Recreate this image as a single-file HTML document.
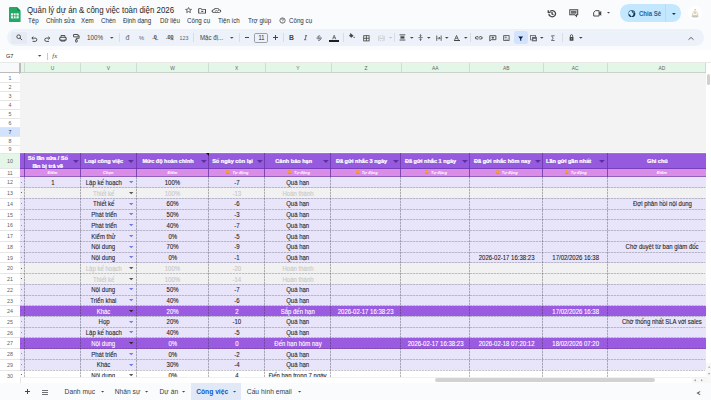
<!DOCTYPE html>
<html><head><meta charset="utf-8"><title>Sheets</title><style>
*{margin:0;padding:0;box-sizing:border-box}
html,body{width:711px;height:400px;overflow:hidden;background:#f9fbfd;font-family:"Liberation Sans",sans-serif;position:relative}
.a{position:absolute}
.t{position:absolute;white-space:nowrap;overflow:visible}
</style></head><body>
<svg class="a" style="left:9.2px;top:6.7px" width="11.6" height="15.4" viewBox="0 0 12 16" preserveAspectRatio="none">
<path d="M1.1 0H8.2L12 3.8V14.9A1.1 1.1 0 0 1 10.9 16H1.1A1.1 1.1 0 0 1 0 14.9V1.1A1.1 1.1 0 0 1 1.1 0Z" fill="#23a966"/>
<path d="M8.2 0L12 3.8H9.3A1.1 1.1 0 0 1 8.2 2.7Z" fill="#168a4f"/>
<rect x="2" y="6.6" width="8" height="5.2" fill="#fff"/>
<path d="M2 9.2H10M4.7 6.6V11.8M7.3 6.6V11.8" stroke="#23a966" stroke-width="0.9"/>
</svg>
<div class="t" style="left:27.10px;top:0.40px;width:300px;height:20px;line-height:20px;font-size:8.4px;color:#1f1f1f;font-weight:normal;text-align:left;"><span style="display:inline-block;transform:scaleX(0.94);transform-origin:0 50%">Quản lý dự án &amp; công việc toàn diện 2026</span></div>
<svg class="a" style="left:184.50px;top:7.20px;overflow:visible" width="7.10" height="6.40" viewBox="0 0 24 24" preserveAspectRatio="none"><path d="M12 2l2.9 6.6 7.1.6-5.4 4.7 1.7 7.1L12 17.2 5.7 21l1.7-7.1L2 9.2l7.1-.6z" fill="none" stroke="#444746" stroke-width="2.8" stroke-linejoin="round"/></svg>
<svg class="a" style="left:197.90px;top:7.50px;overflow:visible" width="8.20" height="5.90" viewBox="0 0 24 24" preserveAspectRatio="none"><path d="M2 3h7l2.5 3H22v15H2z" fill="none" stroke="#444746" stroke-width="3" stroke-linejoin="round"/><path d="M9.5 11.5h6v4.5h-6z" fill="#444746"/></svg>
<svg class="a" style="left:211.90px;top:7.20px;overflow:visible" width="9.00" height="6.20" viewBox="0 0 24 24" preserveAspectRatio="none"><path d="M6.5 21h12a5 5 0 0 0 .8-9.9A7.5 7.5 0 0 0 5.2 10 5.5 5.5 0 0 0 6.5 21z" fill="none" stroke="#444746" stroke-width="2.8"/><path d="M7.5 17.5l4-4 3 2.5 3.5-3" fill="none" stroke="#444746" stroke-width="2.5"/></svg>
<div class="t" style="left:27.70px;top:11.00px;width:80px;height:20px;line-height:20px;font-size:6.4px;color:#303134;font-weight:normal;text-align:left;"><span style="display:inline-block;transform:scaleX(0.97);transform-origin:0 50%">Tệp</span></div>
<div class="t" style="left:45.60px;top:11.00px;width:80px;height:20px;line-height:20px;font-size:6.4px;color:#303134;font-weight:normal;text-align:left;"><span style="display:inline-block;transform:scaleX(0.97);transform-origin:0 50%">Chỉnh sửa</span></div>
<div class="t" style="left:81.40px;top:11.00px;width:80px;height:20px;line-height:20px;font-size:6.4px;color:#303134;font-weight:normal;text-align:left;"><span style="display:inline-block;transform:scaleX(0.97);transform-origin:0 50%">Xem</span></div>
<div class="t" style="left:100.60px;top:11.00px;width:80px;height:20px;line-height:20px;font-size:6.4px;color:#303134;font-weight:normal;text-align:left;"><span style="display:inline-block;transform:scaleX(0.97);transform-origin:0 50%">Chèn</span></div>
<div class="t" style="left:123.20px;top:11.00px;width:80px;height:20px;line-height:20px;font-size:6.4px;color:#303134;font-weight:normal;text-align:left;"><span style="display:inline-block;transform:scaleX(0.97);transform-origin:0 50%">Định dạng</span></div>
<div class="t" style="left:160.10px;top:11.00px;width:80px;height:20px;line-height:20px;font-size:6.4px;color:#303134;font-weight:normal;text-align:left;"><span style="display:inline-block;transform:scaleX(0.97);transform-origin:0 50%">Dữ liệu</span></div>
<div class="t" style="left:186.90px;top:11.00px;width:80px;height:20px;line-height:20px;font-size:6.4px;color:#303134;font-weight:normal;text-align:left;"><span style="display:inline-block;transform:scaleX(0.97);transform-origin:0 50%">Công cụ</span></div>
<div class="t" style="left:217.90px;top:11.00px;width:80px;height:20px;line-height:20px;font-size:6.4px;color:#303134;font-weight:normal;text-align:left;"><span style="display:inline-block;transform:scaleX(0.97);transform-origin:0 50%">Tiện ích</span></div>
<div class="t" style="left:247.60px;top:11.00px;width:80px;height:20px;line-height:20px;font-size:6.4px;color:#303134;font-weight:normal;text-align:left;"><span style="display:inline-block;transform:scaleX(0.97);transform-origin:0 50%">Trợ giúp</span></div>
<div class="t" style="left:288.80px;top:11.00px;width:80px;height:20px;line-height:20px;font-size:6.4px;color:#303134;font-weight:normal;text-align:left;"><span style="display:inline-block;transform:scaleX(0.97);transform-origin:0 50%">Công cụ</span></div>
<svg class="a" style="left:278.5px;top:16.8px" width="7" height="7" viewBox="0 0 24 24"><circle cx="12" cy="12" r="9" fill="none" stroke="#444746" stroke-width="2.6"/><path d="M9 9a3 3 0 1 1 4 3v2" fill="none" stroke="#444746" stroke-width="2.4"/><circle cx="12" cy="17.5" r="1.4" fill="#444746"/></svg>
<svg class="a" style="left:546.60px;top:8.70px;overflow:visible" width="10.00" height="9.30" viewBox="0 0 24 24" preserveAspectRatio="none"><path d="M4.5 12a8 8 0 1 0 2.6-5.9" fill="none" stroke="#444746" stroke-width="3.2"/><path d="M3 3.5v5.5h5.5" fill="none" stroke="#444746" stroke-width="3.2"/><path d="M12 7.5v5l3.5 2.2" fill="none" stroke="#444746" stroke-width="3.2"/></svg>
<svg class="a" style="left:568.70px;top:9.00px;overflow:visible" width="9.50" height="8.40" viewBox="0 0 24 24" preserveAspectRatio="none"><path d="M2 2h20v14.5H19V21l-4.5-4.5H2z" fill="none" stroke="#444746" stroke-width="2.6"/><rect x="5" y="5" width="14" height="8.5" fill="#6b6e70"/></svg>
<svg class="a" style="left:592.90px;top:10.00px;overflow:visible" width="9.00" height="6.70" viewBox="0 0 24 18" preserveAspectRatio="none"><path d="M6.5 1.8h9.7v14.4H1.8V6.5z" fill="none" stroke="#444746" stroke-width="2.6"/><path d="M16 6.5l6-4v13l-6-4" fill="#444746"/></svg>
<svg class="a" style="left:607.10px;top:12.15px;overflow:visible" width="3.00" height="1.50" viewBox="0 0 2 1" preserveAspectRatio="none"><path d="M0 0H2L1 1z" fill="#444746"/></svg>
<div class="a" style="left:620.10px;top:4.30px;width:60.80px;height:17.60px;background:#c2e7ff;border-radius:8.8px"></div>
<div class="a" style="left:665.40px;top:4.30px;width:0.70px;height:17.60px;background:#b3dcf5"></div>
<svg class="a" style="left:628.10px;top:9.80px;overflow:visible" width="7.60" height="7.40" viewBox="0 0 24 24" preserveAspectRatio="none"><circle cx="12" cy="12" r="11" fill="#0e3553"/><path d="M10.5 22c-.5-2.5-2.5-3-2.5-5 0-1.5-2-2-3-2.5-2-1-3.5-2-3.5-3.5 1-4.5 4-7.5 8-8.5.5 1.5 2 2.5 3.5 2.5 1 1 .5 2.5-.5 3 1.5.5 2.5 1.5 4 1 1.5 1.5-.5 3 .5 4.5.5 3-3.5 6-6.5 8z" fill="#c2e7ff"/><path d="M15.5 3c2.5 1 4.5 3 5.5 5.5-1.5.5-3 0-4-1.5z" fill="#c2e7ff"/></svg>
<div class="t" style="left:639.30px;top:3.60px;width:60px;height:20px;line-height:20px;font-size:6.5px;color:#2b5f95;font-weight:bold;text-align:left;"><span style="display:inline-block;transform:scaleX(0.93);transform-origin:0 50%">Chia Sẻ</span></div>
<svg class="a" style="left:671.50px;top:12.55px;overflow:visible" width="3.80" height="1.90" viewBox="0 0 2 1" preserveAspectRatio="none"><path d="M0 0H2L1 1z" fill="#0e3553"/></svg>
<svg class="a" style="left:688px;top:6px" width="14.2" height="14" viewBox="0 0 14 14"><circle cx="7" cy="7" r="7" fill="#fff"/><path d="M4.2 9.6c.2-2.3 1.2-4.6 2.8-4.8 1.6.2 2.6 2.5 2.8 4.8z" fill="#f7f4ec" stroke="#b9b5aa" stroke-width=".5"/><circle cx="7" cy="6.8" r=".9" fill="#f0c63c"/><path d="M3.6 10.3h6.8" stroke="#8f8d86" stroke-width=".6"/><path d="M4.6 11.2h4.8" stroke="#b0aea6" stroke-width=".5"/><path d="M6.4 4.2l.8-1.2.6 1" stroke="#9c9a92" stroke-width=".5" fill="none"/></svg>
<div class="a" style="left:7.20px;top:29.10px;width:696.80px;height:16.70px;background:#edf2fa;border-radius:8.4px"></div>
<div class="a" style="left:10.60px;top:31.60px;width:16.60px;height:12.20px;background:#e5eaf3;border-radius:1.5px"></div>
<svg class="a" style="left:15.60px;top:33.90px;overflow:visible" width="6.80" height="6.80" viewBox="0 0 24 24" preserveAspectRatio="none"><circle cx="9.5" cy="9.5" r="6.5" fill="none" stroke="#444746" stroke-width="3.2"/><path d="M14.5 14.5l7 7" fill="none" stroke="#444746" stroke-width="3.4"/></svg>
<svg class="a" style="left:31.20px;top:35.50px;overflow:visible" width="6.60" height="5.80" viewBox="0 0 6.6 5.8" preserveAspectRatio="none"><path d="M2.3 0.7L0.8 2.1 2.3 3.5" fill="none" stroke="#444746" stroke-width="0.95"/><path d="M1 2.1H4.2A1.65 1.65 0 0 1 4.2 5.4H1.6" fill="none" stroke="#444746" stroke-width="0.95"/></svg>
<svg class="a" style="left:44.40px;top:35.50px;overflow:visible" width="6.60" height="5.80" viewBox="0 0 6.6 5.8" preserveAspectRatio="none"><path d="M4.3 0.7L5.8 2.1 4.3 3.5" fill="none" stroke="#444746" stroke-width="0.95"/><path d="M5.6 2.1H2.4A1.65 1.65 0 0 0 2.4 5.4H5" fill="none" stroke="#444746" stroke-width="0.95"/></svg>
<svg class="a" style="left:58.60px;top:35.00px;overflow:visible" width="7.90" height="6.50" viewBox="0 0 7.9 6.5" preserveAspectRatio="none"><path d="M2 1.9V0.5H5.9V1.9" fill="none" stroke="#444746" stroke-width="0.9"/><rect x="0.75" y="2.2" width="6.4" height="3.1" rx="1" fill="none" stroke="#444746" stroke-width="1.1"/><path d="M2 4.6V6.1H5.9V4.6" fill="none" stroke="#444746" stroke-width="0.9"/></svg>
<svg class="a" style="left:72.60px;top:33.90px;overflow:visible" width="6.60" height="8.30" viewBox="0 0 6.6 8.3" preserveAspectRatio="none"><rect x="0.5" y="0.5" width="4.6" height="2.4" rx="0.3" fill="none" stroke="#444746" stroke-width="0.95"/><path d="M5.1 1.7H6.1V4.3H3.4V5.6" fill="none" stroke="#444746" stroke-width="0.95"/><rect x="2.6" y="5.6" width="1.6" height="2.5" rx="0.3" fill="none" stroke="#444746" stroke-width="0.9"/></svg>
<div class="t" style="left:87.10px;top:27.90px;width:40px;height:20px;line-height:20px;font-size:6.6px;color:#3c4043;font-weight:normal;text-align:left;"><span style="display:inline-block;transform:scaleX(0.95);transform-origin:0 50%">100%</span></div>
<svg class="a" style="left:109.50px;top:37.00px;overflow:visible" width="3.60" height="1.80" viewBox="0 0 2 1" preserveAspectRatio="none"><path d="M0 0H2L1 1z" fill="#444746"/></svg>
<div class="a" style="left:118.75px;top:33.20px;width:0.70px;height:8.60px;background:#d9dce1"></div>
<div class="t" style="left:122.40px;top:28.00px;width:10px;height:20px;line-height:20px;font-size:7.0px;color:#5f6368;font-weight:normal;text-align:center;">đ</div>
<div class="t" style="left:136.50px;top:28.10px;width:10px;height:20px;line-height:20px;font-size:5.8px;color:#5f6368;font-weight:normal;text-align:center;">%</div>
<div class="t" style="left:148.40px;top:27.40px;width:12px;height:20px;line-height:20px;font-size:5.4px;color:#3c4043;font-weight:bold;text-align:center;">.0</div>
<div class="t" style="left:162.80px;top:27.40px;width:14px;height:20px;line-height:20px;font-size:5.4px;color:#3c4043;font-weight:bold;text-align:center;">.00</div>
<svg class="a" style="left:155.20px;top:39.20px;overflow:visible" width="3.60" height="2.00" viewBox="0 0 24 24" preserveAspectRatio="none"><path d="M22 6H4M9 1L3 6l6 5" fill="none" stroke="#444746" stroke-width="4"/></svg>
<svg class="a" style="left:169.80px;top:39.20px;overflow:visible" width="3.80" height="2.00" viewBox="0 0 24 24" preserveAspectRatio="none"><path d="M2 6h18M15 1l6 5-6 5" fill="none" stroke="#444746" stroke-width="4"/></svg>
<div class="t" style="left:174.00px;top:28.10px;width:20px;height:20px;line-height:20px;font-size:5.3px;color:#5f6368;font-weight:normal;text-align:center;">123</div>
<div class="a" style="left:193.45px;top:33.20px;width:0.70px;height:8.60px;background:#d9dce1"></div>
<div class="t" style="left:199.90px;top:28.00px;width:40px;height:20px;line-height:20px;font-size:6.5px;color:#3c4043;font-weight:normal;text-align:left;"><span style="display:inline-block;transform:scaleX(0.94);transform-origin:0 50%">Mặc đị...</span></div>
<svg class="a" style="left:229.80px;top:37.00px;overflow:visible" width="3.60" height="1.80" viewBox="0 0 2 1" preserveAspectRatio="none"><path d="M0 0H2L1 1z" fill="#444746"/></svg>
<div class="a" style="left:239.25px;top:33.20px;width:0.70px;height:8.60px;background:#d9dce1"></div>
<div class="a" style="left:244.50px;top:37.10px;width:4.70px;height:0.70px;background:#444746"></div>
<div class="a" style="left:254.30px;top:32.70px;width:14.20px;height:10.00px;border:0.75px solid #9aa0a6;border-radius:1.8px"></div>
<div class="t" style="left:254.50px;top:27.80px;width:14px;height:20px;line-height:20px;font-size:6.5px;color:#1f1f1f;font-weight:normal;text-align:center;"><span style="display:inline-block;transform:scaleX(0.88);transform-origin:50% 50%">11</span></div>
<div class="a" style="left:272.70px;top:37.10px;width:5.40px;height:0.70px;background:#444746"></div>
<div class="a" style="left:275.05px;top:34.80px;width:0.70px;height:5.40px;background:#444746"></div>
<div class="a" style="left:282.65px;top:33.20px;width:0.70px;height:8.60px;background:#d9dce1"></div>
<div class="t" style="left:286.40px;top:28.10px;width:10px;height:20px;line-height:20px;font-size:6.8px;color:#444746;font-weight:bold;text-align:center;">B</div>
<svg class="a" style="left:303.00px;top:34.90px;overflow:visible" width="5.20" height="5.40" viewBox="0 0 24 24" preserveAspectRatio="none"><path d="M9 3h10M5 21h10M14.5 3l-5 18" fill="none" stroke="#444746" stroke-width="3.4"/></svg>
<svg class="a" style="left:316.30px;top:34.60px;overflow:visible" width="6.30" height="6.20" viewBox="0 0 24 24" preserveAspectRatio="none"><path d="M16.5 5.5C15 3.8 13.5 3.5 12 3.5c-2.5 0-4.5 1.5-4.5 3.5 0 1.3.8 2.3 2 3M14.5 14c1.2.7 2 1.6 2 3 0 2-2 3.5-4.5 3.5-1.8 0-3.5-.7-4.8-2.3" fill="none" stroke="#444746" stroke-width="3.4"/><path d="M2 12h20" fill="none" stroke="#444746" stroke-width="3.4"/></svg>
<svg class="a" style="left:332.00px;top:34.70px;overflow:visible" width="4.40" height="4.50" viewBox="0 0 24 24" preserveAspectRatio="none"><path d="M3 23L12 1l9 22M6.5 15h11" fill="none" stroke="#444746" stroke-width="3.8"/></svg>
<div class="a" style="left:328.60px;top:40.10px;width:10.40px;height:1.60px;background:#1f1f1f"></div>
<div class="a" style="left:343.15px;top:33.20px;width:0.70px;height:8.60px;background:#d9dce1"></div>
<svg class="a" style="left:348.00px;top:33.40px;overflow:visible" width="7.00" height="6.00" viewBox="0 0 24 24" preserveAspectRatio="none"><path d="M10 2l9 9-7.5 7.5-8-8z" fill="#444746"/><path d="M21 14c1.2 2 2 3 2 4a2 2 0 0 1-4 0c0-1 .8-2 2-4z" fill="#444746"/><path d="M7 1l4 4" fill="none" stroke="#444746" stroke-width="2.5"/></svg>
<svg class="a" style="left:363.20px;top:34.50px;overflow:visible" width="6.80" height="6.60" viewBox="0 0 24 24" preserveAspectRatio="none"><rect x="2.5" y="2.5" width="19" height="19" fill="none" stroke="#444746" stroke-width="3"/><path d="M2.5 12h19M12 2.5v19" fill="none" stroke="#444746" stroke-width="3"/></svg>
<svg class="a" style="left:378.20px;top:34.50px;overflow:visible" width="6.90" height="6.60" viewBox="0 0 24 24" preserveAspectRatio="none"><path d="M3 3v18M21 3v18M7 3h3M14 3h3M7 21h3M14 21h3M7 12h10" fill="none" stroke="#b9bdc1" stroke-width="3"/></svg>
<svg class="a" style="left:389.00px;top:37.10px;overflow:visible" width="3.20" height="1.60" viewBox="0 0 2 1" preserveAspectRatio="none"><path d="M0 0H2L1 1z" fill="#b9bdc1"/></svg>
<div class="a" style="left:394.45px;top:33.20px;width:0.70px;height:8.60px;background:#d9dce1"></div>
<svg class="a" style="left:399.30px;top:34.40px;overflow:visible" width="6.90" height="6.90" viewBox="0 0 24 24" preserveAspectRatio="none"><path d="M2 3h20M2 21h20" fill="none" stroke="#444746" stroke-width="3.2"/><rect x="5" y="8" width="14" height="8" fill="#444746"/></svg>
<svg class="a" style="left:409.50px;top:37.00px;overflow:visible" width="3.60" height="1.80" viewBox="0 0 2 1" preserveAspectRatio="none"><path d="M0 0H2L1 1z" fill="#444746"/></svg>
<svg class="a" style="left:418.20px;top:34.20px;overflow:visible" width="5.10" height="7.20" viewBox="0 0 24 24" preserveAspectRatio="none"><path d="M2 12h20" fill="none" stroke="#444746" stroke-width="3"/><path d="M12 1v7M8.5 5l3.5 3.5L15.5 5M12 23v-7M8.5 19l3.5-3.5 3.5 3.5" fill="none" stroke="#444746" stroke-width="3"/></svg>
<svg class="a" style="left:426.70px;top:37.00px;overflow:visible" width="3.60" height="1.80" viewBox="0 0 2 1" preserveAspectRatio="none"><path d="M0 0H2L1 1z" fill="#444746"/></svg>
<svg class="a" style="left:435.70px;top:34.60px;overflow:visible" width="5.90" height="6.40" viewBox="0 0 24 24" preserveAspectRatio="none"><path d="M3 2v20M21 2v20M6 12h10M12.5 7.5L17 12l-4.5 4.5" fill="none" stroke="#444746" stroke-width="3.2"/></svg>
<svg class="a" style="left:444.60px;top:37.00px;overflow:visible" width="3.60" height="1.80" viewBox="0 0 2 1" preserveAspectRatio="none"><path d="M0 0H2L1 1z" fill="#444746"/></svg>
<svg class="a" style="left:454.40px;top:34.60px;overflow:visible" width="5.10" height="5.40" viewBox="0 0 24 24" preserveAspectRatio="none"><path d="M3 22L12 2l9 20M6.5 14.5h11" fill="none" stroke="#444746" stroke-width="3.6"/></svg>
<div class="a" style="left:453.80px;top:40.40px;width:6.20px;height:0.80px;background:#444746"></div>
<svg class="a" style="left:463.70px;top:37.00px;overflow:visible" width="3.60" height="1.80" viewBox="0 0 2 1" preserveAspectRatio="none"><path d="M0 0H2L1 1z" fill="#444746"/></svg>
<div class="a" style="left:469.75px;top:33.20px;width:0.70px;height:8.60px;background:#d9dce1"></div>
<svg class="a" style="left:474.90px;top:35.90px;overflow:visible" width="7.70" height="3.70" viewBox="0 0 24 15" preserveAspectRatio="none"><path d="M10 2.5H6.5a5 5 0 0 0 0 10H10M14 2.5h3.5a5 5 0 0 1 0 10H14M8 7.5h8" fill="none" stroke="#444746" stroke-width="3.2"/></svg>
<svg class="a" style="left:488.90px;top:34.50px;overflow:visible" width="7.70" height="6.80" viewBox="0 0 24 24" preserveAspectRatio="none"><path d="M2.5 2.5h19v14H7l-4.5 4.5z" fill="none" stroke="#444746" stroke-width="3"/><path d="M12 5.5v8M8 9.5h8" fill="none" stroke="#444746" stroke-width="3"/></svg>
<svg class="a" style="left:503.20px;top:35.00px;overflow:visible" width="6.80" height="6.20" viewBox="0 0 24 24" preserveAspectRatio="none"><rect x="2.5" y="2.5" width="19" height="19" fill="none" stroke="#444746" stroke-width="3"/><rect x="6" y="6" width="7" height="6" fill="#80868b"/><path d="M6 16h12" fill="none" stroke="#80868b" stroke-width="2.5"/></svg>
<div class="a" style="left:514.30px;top:31.00px;width:13.40px;height:13.10px;background:#d3e3fd;border-radius:2.8px"></div>
<svg class="a" style="left:518.30px;top:35.50px;overflow:visible" width="5.40" height="5.50" viewBox="0 0 24 24" preserveAspectRatio="none"><path d="M1 2h22l-8.5 10v10l-5-2.5V12z" fill="#041e49"/></svg>
<svg class="a" style="left:529.70px;top:34.80px;overflow:visible" width="7.20" height="6.60" viewBox="0 0 24 24" preserveAspectRatio="none"><rect x="2" y="2" width="16" height="16" fill="none" stroke="#5f6368" stroke-width="3"/><rect x="7" y="7" width="16" height="16" fill="#5f6368"/><rect x="11" y="14" width="8" height="5" fill="#edf2fa"/></svg>
<svg class="a" style="left:540.00px;top:37.00px;overflow:visible" width="3.60" height="1.80" viewBox="0 0 2 1" preserveAspectRatio="none"><path d="M0 0H2L1 1z" fill="#444746"/></svg>
<svg class="a" style="left:551.20px;top:34.70px;overflow:visible" width="4.30" height="6.30" viewBox="0 0 24 24" preserveAspectRatio="none"><path d="M20 3H3l9 9-9 9h17" fill="none" stroke="#444746" stroke-width="3.4"/></svg>
<div class="a" style="left:561.95px;top:33.20px;width:0.70px;height:8.60px;background:#d9dce1"></div>
<svg class="a" style="left:568.90px;top:34.30px;overflow:visible" width="5.10" height="7.00" viewBox="0 0 24 24" preserveAspectRatio="none"><path d="M6.5 11V7.5a5.5 5.5 0 0 1 11 0V11" fill="none" stroke="#444746" stroke-width="3.4"/><rect x="3" y="10" width="18" height="13" rx="2" fill="#444746"/><circle cx="12" cy="16.5" r="2" fill="#edf2fa"/></svg>
<svg class="a" style="left:578.50px;top:37.00px;overflow:visible" width="3.60" height="1.80" viewBox="0 0 2 1" preserveAspectRatio="none"><path d="M0 0H2L1 1z" fill="#444746"/></svg>
<svg class="a" style="left:688.30px;top:36.50px;overflow:visible" width="6.00" height="3.10" viewBox="0 0 24 14" preserveAspectRatio="none"><path d="M2 12L12 2l10 10" fill="none" stroke="#444746" stroke-width="3.6"/></svg>
<div class="a" style="left:0.00px;top:50.10px;width:711.00px;height:11.90px;background:#fff"></div>
<div class="a" style="left:0.00px;top:61.80px;width:711.00px;height:0.70px;background:#e8eae8"></div>
<div class="t" style="left:6.00px;top:46.20px;width:20px;height:20px;line-height:20px;font-size:5.6px;color:#1f1f1f;font-weight:normal;text-align:left;">G7</div>
<svg class="a" style="left:38.30px;top:55.15px;overflow:visible" width="3.40" height="1.70" viewBox="0 0 2 1" preserveAspectRatio="none"><path d="M0 0H2L1 1z" fill="#444746"/></svg>
<div class="a" style="left:47.30px;top:53.30px;width:0.70px;height:6.40px;background:#c7c7c7"></div>
<div class="t" style="left:52.30px;top:46.30px;width:12px;height:20px;line-height:20px;font-size:6.6px;color:#444746;font-weight:normal;text-align:left;font-style:italic;font-family:'Liberation Serif',serif">fx</div>
<div class="a" style="left:0.00px;top:62.50px;width:711.00px;height:320.50px;background:#fff"></div>
<div class="a" style="left:0.00px;top:62.50px;width:19.30px;height:10.50px;background:#f8f9fa"></div>
<div class="a" style="left:19.30px;top:62.50px;width:1.50px;height:11.00px;background:#bcbcbc"></div>
<div class="a" style="left:0.00px;top:72.30px;width:20.00px;height:1.00px;background:#bcbcbc"></div>
<div class="a" style="left:20.80px;top:62.50px;width:685.00px;height:10.50px;background:#e4f6e7"></div>
<div class="a" style="left:24.10px;top:62.50px;width:0.80px;height:10.50px;background:#cfdcd2"></div>
<div class="a" style="left:80.10px;top:62.50px;width:0.80px;height:10.50px;background:#cfdcd2"></div>
<div class="a" style="left:136.10px;top:62.50px;width:0.80px;height:10.50px;background:#cfdcd2"></div>
<div class="a" style="left:208.10px;top:62.50px;width:0.80px;height:10.50px;background:#cfdcd2"></div>
<div class="a" style="left:264.60px;top:62.50px;width:0.80px;height:10.50px;background:#cfdcd2"></div>
<div class="a" style="left:330.60px;top:62.50px;width:0.80px;height:10.50px;background:#cfdcd2"></div>
<div class="a" style="left:400.60px;top:62.50px;width:0.80px;height:10.50px;background:#cfdcd2"></div>
<div class="a" style="left:469.10px;top:62.50px;width:0.80px;height:10.50px;background:#cfdcd2"></div>
<div class="a" style="left:542.60px;top:62.50px;width:0.80px;height:10.50px;background:#cfdcd2"></div>
<div class="a" style="left:607.10px;top:62.50px;width:0.80px;height:10.50px;background:#cfdcd2"></div>
<div class="a" style="left:705.40px;top:62.50px;width:0.80px;height:10.50px;background:#cfdcd2"></div>
<div class="a" style="left:20.80px;top:72.40px;width:685.00px;height:0.60px;background:#c8d3cb"></div>
<div class="t" style="left:32.50px;top:58.80px;width:40px;height:20px;line-height:20px;font-size:4.9px;color:#5f6368;font-weight:normal;text-align:center;">U</div>
<div class="t" style="left:88.50px;top:58.80px;width:40px;height:20px;line-height:20px;font-size:4.9px;color:#5f6368;font-weight:normal;text-align:center;">V</div>
<div class="t" style="left:152.50px;top:58.80px;width:40px;height:20px;line-height:20px;font-size:4.9px;color:#5f6368;font-weight:normal;text-align:center;">W</div>
<div class="t" style="left:216.75px;top:58.80px;width:40px;height:20px;line-height:20px;font-size:4.9px;color:#5f6368;font-weight:normal;text-align:center;">X</div>
<div class="t" style="left:278.00px;top:58.80px;width:40px;height:20px;line-height:20px;font-size:4.9px;color:#5f6368;font-weight:normal;text-align:center;">Y</div>
<div class="t" style="left:346.00px;top:58.80px;width:40px;height:20px;line-height:20px;font-size:4.9px;color:#5f6368;font-weight:normal;text-align:center;">Z</div>
<div class="t" style="left:415.25px;top:58.80px;width:40px;height:20px;line-height:20px;font-size:4.9px;color:#5f6368;font-weight:normal;text-align:center;">AA</div>
<div class="t" style="left:486.25px;top:58.80px;width:40px;height:20px;line-height:20px;font-size:4.9px;color:#5f6368;font-weight:normal;text-align:center;">AB</div>
<div class="t" style="left:555.25px;top:58.80px;width:40px;height:20px;line-height:20px;font-size:4.9px;color:#5f6368;font-weight:normal;text-align:center;">AC</div>
<div class="t" style="left:642.00px;top:58.80px;width:40px;height:20px;line-height:20px;font-size:4.9px;color:#5f6368;font-weight:normal;text-align:center;">AD</div>
<div class="a" style="left:0.00px;top:73.50px;width:19.80px;height:8.70px;background:#fff"></div>
<div class="a" style="left:0.00px;top:82.20px;width:19.80px;height:9.00px;background:#fff"></div>
<div class="a" style="left:0.00px;top:91.20px;width:19.80px;height:9.10px;background:#fff"></div>
<div class="a" style="left:0.00px;top:100.30px;width:19.80px;height:8.95px;background:#fff"></div>
<div class="a" style="left:0.00px;top:109.25px;width:19.80px;height:9.00px;background:#fff"></div>
<div class="a" style="left:0.00px;top:118.25px;width:19.80px;height:8.85px;background:#fff"></div>
<div class="a" style="left:0.00px;top:127.10px;width:19.80px;height:9.10px;background:#d3e3fd"></div>
<div class="a" style="left:0.00px;top:136.20px;width:19.80px;height:8.80px;background:#fff"></div>
<div class="a" style="left:0.00px;top:145.00px;width:19.80px;height:8.00px;background:#fff"></div>
<div class="a" style="left:0.00px;top:153.00px;width:19.80px;height:15.50px;background:#e4f6e7"></div>
<div class="a" style="left:0.00px;top:168.50px;width:19.80px;height:8.50px;background:#fff"></div>
<div class="a" style="left:0.00px;top:177.00px;width:19.80px;height:10.73px;background:#fff"></div>
<div class="a" style="left:0.00px;top:187.73px;width:19.80px;height:10.73px;background:#fff"></div>
<div class="a" style="left:0.00px;top:198.46px;width:19.80px;height:10.73px;background:#fff"></div>
<div class="a" style="left:0.00px;top:209.19px;width:19.80px;height:10.73px;background:#fff"></div>
<div class="a" style="left:0.00px;top:219.92px;width:19.80px;height:10.73px;background:#fff"></div>
<div class="a" style="left:0.00px;top:230.65px;width:19.80px;height:10.73px;background:#fff"></div>
<div class="a" style="left:0.00px;top:241.38px;width:19.80px;height:10.73px;background:#fff"></div>
<div class="a" style="left:0.00px;top:252.11px;width:19.80px;height:10.73px;background:#fff"></div>
<div class="a" style="left:0.00px;top:262.84px;width:19.80px;height:10.73px;background:#fff"></div>
<div class="a" style="left:0.00px;top:273.57px;width:19.80px;height:10.73px;background:#fff"></div>
<div class="a" style="left:0.00px;top:284.30px;width:19.80px;height:10.73px;background:#fff"></div>
<div class="a" style="left:0.00px;top:295.03px;width:19.80px;height:10.73px;background:#fff"></div>
<div class="a" style="left:0.00px;top:305.76px;width:19.80px;height:10.73px;background:#fff"></div>
<div class="a" style="left:0.00px;top:316.49px;width:19.80px;height:10.73px;background:#fff"></div>
<div class="a" style="left:0.00px;top:327.22px;width:19.80px;height:10.73px;background:#fff"></div>
<div class="a" style="left:0.00px;top:337.95px;width:19.80px;height:10.73px;background:#fff"></div>
<div class="a" style="left:0.00px;top:348.68px;width:19.80px;height:10.73px;background:#fff"></div>
<div class="a" style="left:0.00px;top:359.41px;width:19.80px;height:10.73px;background:#fff"></div>
<div class="a" style="left:0.00px;top:370.14px;width:19.80px;height:7.46px;background:#fff"></div>
<div class="a" style="left:0.00px;top:82.00px;width:19.80px;height:1.00px;background:#e6e6e6"></div>
<div class="a" style="left:0.00px;top:91.00px;width:19.80px;height:1.00px;background:#e6e6e6"></div>
<div class="a" style="left:0.00px;top:100.00px;width:19.80px;height:1.00px;background:#e6e6e6"></div>
<div class="a" style="left:0.00px;top:109.00px;width:19.80px;height:1.00px;background:#e6e6e6"></div>
<div class="a" style="left:0.00px;top:118.00px;width:19.80px;height:1.00px;background:#e6e6e6"></div>
<div class="a" style="left:0.00px;top:127.00px;width:19.80px;height:1.00px;background:#e6e6e6"></div>
<div class="a" style="left:0.00px;top:136.00px;width:19.80px;height:1.00px;background:#e6e6e6"></div>
<div class="a" style="left:0.00px;top:145.00px;width:19.80px;height:1.00px;background:#e6e6e6"></div>
<div class="a" style="left:0.00px;top:153.00px;width:19.80px;height:1.00px;background:#e6e6e6"></div>
<div class="a" style="left:0.00px;top:168.00px;width:19.80px;height:1.00px;background:#e6e6e6"></div>
<div class="a" style="left:0.00px;top:177.00px;width:19.80px;height:1.00px;background:#e6e6e6"></div>
<div class="a" style="left:0.00px;top:187.00px;width:19.80px;height:1.00px;background:#e6e6e6"></div>
<div class="a" style="left:0.00px;top:198.00px;width:19.80px;height:1.00px;background:#e6e6e6"></div>
<div class="a" style="left:0.00px;top:209.00px;width:19.80px;height:1.00px;background:#e6e6e6"></div>
<div class="a" style="left:0.00px;top:219.00px;width:19.80px;height:1.00px;background:#e6e6e6"></div>
<div class="a" style="left:0.00px;top:230.00px;width:19.80px;height:1.00px;background:#e6e6e6"></div>
<div class="a" style="left:0.00px;top:241.00px;width:19.80px;height:1.00px;background:#e6e6e6"></div>
<div class="a" style="left:0.00px;top:252.00px;width:19.80px;height:1.00px;background:#e6e6e6"></div>
<div class="a" style="left:0.00px;top:262.00px;width:19.80px;height:1.00px;background:#e6e6e6"></div>
<div class="a" style="left:0.00px;top:273.00px;width:19.80px;height:1.00px;background:#e6e6e6"></div>
<div class="a" style="left:0.00px;top:284.00px;width:19.80px;height:1.00px;background:#e6e6e6"></div>
<div class="a" style="left:0.00px;top:295.00px;width:19.80px;height:1.00px;background:#e6e6e6"></div>
<div class="a" style="left:0.00px;top:305.00px;width:19.80px;height:1.00px;background:#e6e6e6"></div>
<div class="a" style="left:0.00px;top:316.00px;width:19.80px;height:1.00px;background:#e6e6e6"></div>
<div class="a" style="left:0.00px;top:327.00px;width:19.80px;height:1.00px;background:#e6e6e6"></div>
<div class="a" style="left:0.00px;top:337.00px;width:19.80px;height:1.00px;background:#e6e6e6"></div>
<div class="a" style="left:0.00px;top:348.00px;width:19.80px;height:1.00px;background:#e6e6e6"></div>
<div class="a" style="left:0.00px;top:359.00px;width:19.80px;height:1.00px;background:#e6e6e6"></div>
<div class="a" style="left:0.00px;top:370.00px;width:19.80px;height:1.00px;background:#e6e6e6"></div>
<div class="t" style="left:0.00px;top:67.95px;width:20px;height:20px;line-height:20px;font-size:5.3px;color:#5f6368;font-weight:normal;text-align:center;">1</div>
<div class="t" style="left:0.00px;top:76.80px;width:20px;height:20px;line-height:20px;font-size:5.3px;color:#5f6368;font-weight:normal;text-align:center;">2</div>
<div class="t" style="left:0.00px;top:85.85px;width:20px;height:20px;line-height:20px;font-size:5.3px;color:#5f6368;font-weight:normal;text-align:center;">3</div>
<div class="t" style="left:0.00px;top:94.88px;width:20px;height:20px;line-height:20px;font-size:5.3px;color:#5f6368;font-weight:normal;text-align:center;">4</div>
<div class="t" style="left:0.00px;top:103.85px;width:20px;height:20px;line-height:20px;font-size:5.3px;color:#5f6368;font-weight:normal;text-align:center;">5</div>
<div class="t" style="left:0.00px;top:112.77px;width:20px;height:20px;line-height:20px;font-size:5.3px;color:#5f6368;font-weight:normal;text-align:center;">6</div>
<div class="t" style="left:0.00px;top:121.75px;width:20px;height:20px;line-height:20px;font-size:5.3px;color:#0a2a66;font-weight:normal;text-align:center;">7</div>
<div class="t" style="left:0.00px;top:130.70px;width:20px;height:20px;line-height:20px;font-size:5.3px;color:#5f6368;font-weight:normal;text-align:center;">8</div>
<div class="t" style="left:0.00px;top:139.10px;width:20px;height:20px;line-height:20px;font-size:5.3px;color:#5f6368;font-weight:normal;text-align:center;">9</div>
<div class="t" style="left:0.00px;top:150.85px;width:20px;height:20px;line-height:20px;font-size:5.3px;color:#5f6368;font-weight:normal;text-align:center;">10</div>
<div class="t" style="left:0.00px;top:162.85px;width:20px;height:20px;line-height:20px;font-size:5.3px;color:#5f6368;font-weight:normal;text-align:center;">11</div>
<div class="t" style="left:0.00px;top:172.47px;width:20px;height:20px;line-height:20px;font-size:5.3px;color:#5f6368;font-weight:normal;text-align:center;">12</div>
<div class="t" style="left:0.00px;top:183.20px;width:20px;height:20px;line-height:20px;font-size:5.3px;color:#5f6368;font-weight:normal;text-align:center;">13</div>
<div class="t" style="left:0.00px;top:193.93px;width:20px;height:20px;line-height:20px;font-size:5.3px;color:#5f6368;font-weight:normal;text-align:center;">14</div>
<div class="t" style="left:0.00px;top:204.66px;width:20px;height:20px;line-height:20px;font-size:5.3px;color:#5f6368;font-weight:normal;text-align:center;">15</div>
<div class="t" style="left:0.00px;top:215.39px;width:20px;height:20px;line-height:20px;font-size:5.3px;color:#5f6368;font-weight:normal;text-align:center;">16</div>
<div class="t" style="left:0.00px;top:226.12px;width:20px;height:20px;line-height:20px;font-size:5.3px;color:#5f6368;font-weight:normal;text-align:center;">17</div>
<div class="t" style="left:0.00px;top:236.85px;width:20px;height:20px;line-height:20px;font-size:5.3px;color:#5f6368;font-weight:normal;text-align:center;">18</div>
<div class="t" style="left:0.00px;top:247.58px;width:20px;height:20px;line-height:20px;font-size:5.3px;color:#5f6368;font-weight:normal;text-align:center;">19</div>
<div class="t" style="left:0.00px;top:258.31px;width:20px;height:20px;line-height:20px;font-size:5.3px;color:#5f6368;font-weight:normal;text-align:center;">20</div>
<div class="t" style="left:0.00px;top:269.04px;width:20px;height:20px;line-height:20px;font-size:5.3px;color:#5f6368;font-weight:normal;text-align:center;">21</div>
<div class="t" style="left:0.00px;top:279.76px;width:20px;height:20px;line-height:20px;font-size:5.3px;color:#5f6368;font-weight:normal;text-align:center;">22</div>
<div class="t" style="left:0.00px;top:290.50px;width:20px;height:20px;line-height:20px;font-size:5.3px;color:#5f6368;font-weight:normal;text-align:center;">23</div>
<div class="t" style="left:0.00px;top:301.23px;width:20px;height:20px;line-height:20px;font-size:5.3px;color:#5f6368;font-weight:normal;text-align:center;">24</div>
<div class="t" style="left:0.00px;top:311.96px;width:20px;height:20px;line-height:20px;font-size:5.3px;color:#5f6368;font-weight:normal;text-align:center;">25</div>
<div class="t" style="left:0.00px;top:322.69px;width:20px;height:20px;line-height:20px;font-size:5.3px;color:#5f6368;font-weight:normal;text-align:center;">26</div>
<div class="t" style="left:0.00px;top:333.42px;width:20px;height:20px;line-height:20px;font-size:5.3px;color:#5f6368;font-weight:normal;text-align:center;">27</div>
<div class="t" style="left:0.00px;top:344.14px;width:20px;height:20px;line-height:20px;font-size:5.3px;color:#5f6368;font-weight:normal;text-align:center;">28</div>
<div class="t" style="left:0.00px;top:354.88px;width:20px;height:20px;line-height:20px;font-size:5.3px;color:#5f6368;font-weight:normal;text-align:center;">29</div>
<div class="t" style="left:0.00px;top:365.61px;width:20px;height:20px;line-height:20px;font-size:5.3px;color:#5f6368;font-weight:normal;text-align:center;">30</div>
<div class="a" style="left:19.50px;top:73.00px;width:0.70px;height:304.60px;background:#d7d7d7"></div>
<div class="a" style="left:20.20px;top:73.30px;width:685.60px;height:79.70px;background:#f3f3f3"></div>
<div class="a" style="left:20.20px;top:153.00px;width:685.60px;height:15.50px;background:#955ade"></div>
<div class="a" style="left:20.20px;top:152.00px;width:685.60px;height:1.00px;background:#fbfbfb"></div>
<div class="a" style="left:20.20px;top:153.00px;width:685.60px;height:1.00px;background:#7d8f9a"></div>
<div class="a" style="left:20.20px;top:168.50px;width:685.60px;height:8.50px;background:#d98de7"></div>
<div class="a" style="left:20.20px;top:168.10px;width:685.60px;height:0.80px;background:#7a3fbe"></div>
<div class="a" style="left:20.20px;top:176.00px;width:685.60px;height:1.00px;background:#8e62bd"></div>
<div class="a" style="left:20.20px;top:177.00px;width:685.60px;height:10.73px;background:#e8e5fb"></div>
<div class="a" style="left:20.20px;top:187.73px;width:685.60px;height:10.73px;background:#f1f1f1"></div>
<div class="a" style="left:20.20px;top:198.46px;width:685.60px;height:10.73px;background:#e8e5fb"></div>
<div class="a" style="left:20.20px;top:209.19px;width:685.60px;height:10.73px;background:#e8e5fb"></div>
<div class="a" style="left:20.20px;top:219.92px;width:685.60px;height:10.73px;background:#e8e5fb"></div>
<div class="a" style="left:20.20px;top:230.65px;width:685.60px;height:10.73px;background:#e8e5fb"></div>
<div class="a" style="left:20.20px;top:241.38px;width:685.60px;height:10.73px;background:#e8e5fb"></div>
<div class="a" style="left:20.20px;top:252.11px;width:685.60px;height:10.73px;background:#e8e5fb"></div>
<div class="a" style="left:20.20px;top:262.84px;width:685.60px;height:10.73px;background:#f1f1f1"></div>
<div class="a" style="left:20.20px;top:273.57px;width:685.60px;height:10.73px;background:#f1f1f1"></div>
<div class="a" style="left:20.20px;top:284.30px;width:685.60px;height:10.73px;background:#e8e5fb"></div>
<div class="a" style="left:20.20px;top:295.03px;width:685.60px;height:10.73px;background:#e8e5fb"></div>
<div class="a" style="left:20.20px;top:305.76px;width:685.60px;height:10.73px;background:#9b5be0"></div>
<div class="a" style="left:20.20px;top:316.49px;width:685.60px;height:10.73px;background:#e8e5fb"></div>
<div class="a" style="left:20.20px;top:327.22px;width:685.60px;height:10.73px;background:#e8e5fb"></div>
<div class="a" style="left:20.20px;top:337.95px;width:685.60px;height:10.73px;background:#9b5be0"></div>
<div class="a" style="left:20.20px;top:348.68px;width:685.60px;height:10.73px;background:#e8e5fb"></div>
<div class="a" style="left:20.20px;top:359.41px;width:685.60px;height:10.73px;background:#e8e5fb"></div>
<div class="a" style="left:20.20px;top:370.14px;width:685.60px;height:7.46px;background:#fff"></div>
<div class="t" style="left:2.50px;top:172.97px;width:100px;height:20px;line-height:20px;font-size:6.6px;color:#1f1f1f;font-weight:normal;text-align:center;-webkit-text-stroke:0.1px #1f1f1f"><span style="display:inline-block;transform:scaleX(0.91);transform-origin:50% 50%">1</span></div>
<div class="t" style="left:73.70px;top:172.97px;width:60px;height:20px;line-height:20px;font-size:6.6px;color:#1f1f1f;font-weight:normal;text-align:center;-webkit-text-stroke:0.1px #1f1f1f"><span style="display:inline-block;transform:scaleX(0.91);transform-origin:50% 50%">Lập kế hoạch</span></div>
<div class="t" style="left:122.50px;top:172.97px;width:100px;height:20px;line-height:20px;font-size:6.6px;color:#1f1f1f;font-weight:normal;text-align:center;-webkit-text-stroke:0.1px #1f1f1f"><span style="display:inline-block;transform:scaleX(0.91);transform-origin:50% 50%">100%</span></div>
<div class="t" style="left:186.75px;top:172.97px;width:100px;height:20px;line-height:20px;font-size:6.6px;color:#1f1f1f;font-weight:normal;text-align:center;-webkit-text-stroke:0.1px #1f1f1f"><span style="display:inline-block;transform:scaleX(0.91);transform-origin:50% 50%">-7</span></div>
<div class="t" style="left:248.00px;top:172.97px;width:100px;height:20px;line-height:20px;font-size:6.6px;color:#1f1f1f;font-weight:normal;text-align:center;-webkit-text-stroke:0.1px #1f1f1f"><span style="display:inline-block;transform:scaleX(0.91);transform-origin:50% 50%">Quá hạn</span></div>
<svg class="a" style="left:129.10px;top:181.17px;overflow:visible" width="4.40" height="2.20" viewBox="0 0 2 1" preserveAspectRatio="none"><path d="M0 0H2L1 1z" fill="#6d7be8"/></svg>
<div class="a" style="left:20.60px;top:181.67px;width:0.80px;height:0.80px;background:#8a94ef"></div>
<div class="t" style="left:73.70px;top:183.70px;width:60px;height:20px;line-height:20px;font-size:6.6px;color:#c8c8c8;font-weight:normal;text-align:center;-webkit-text-stroke:0.1px #c8c8c8"><span style="display:inline-block;transform:scaleX(0.91);transform-origin:50% 50%">Thiết kế</span></div>
<div class="t" style="left:122.50px;top:183.70px;width:100px;height:20px;line-height:20px;font-size:6.6px;color:#c8c8c8;font-weight:normal;text-align:center;-webkit-text-stroke:0.1px #c8c8c8"><span style="display:inline-block;transform:scaleX(0.91);transform-origin:50% 50%">100%</span></div>
<div class="t" style="left:186.75px;top:183.70px;width:100px;height:20px;line-height:20px;font-size:6.6px;color:#c8c8c8;font-weight:normal;text-align:center;-webkit-text-stroke:0.1px #c8c8c8"><span style="display:inline-block;transform:scaleX(0.91);transform-origin:50% 50%">-13</span></div>
<div class="t" style="left:248.00px;top:183.70px;width:100px;height:20px;line-height:20px;font-size:6.6px;color:#c8c8c8;font-weight:normal;text-align:center;-webkit-text-stroke:0.1px #c8c8c8"><span style="display:inline-block;transform:scaleX(0.91);transform-origin:50% 50%">Hoàn thành</span></div>
<svg class="a" style="left:129.10px;top:191.90px;overflow:visible" width="4.40" height="2.20" viewBox="0 0 2 1" preserveAspectRatio="none"><path d="M0 0H2L1 1z" fill="#555"/></svg>
<div class="a" style="left:20.60px;top:192.40px;width:0.80px;height:0.80px;background:#666"></div>
<div class="t" style="left:73.70px;top:194.43px;width:60px;height:20px;line-height:20px;font-size:6.6px;color:#1f1f1f;font-weight:normal;text-align:center;-webkit-text-stroke:0.1px #1f1f1f"><span style="display:inline-block;transform:scaleX(0.91);transform-origin:50% 50%">Thiết kế</span></div>
<div class="t" style="left:122.50px;top:194.43px;width:100px;height:20px;line-height:20px;font-size:6.6px;color:#1f1f1f;font-weight:normal;text-align:center;-webkit-text-stroke:0.1px #1f1f1f"><span style="display:inline-block;transform:scaleX(0.91);transform-origin:50% 50%">60%</span></div>
<div class="t" style="left:186.75px;top:194.43px;width:100px;height:20px;line-height:20px;font-size:6.6px;color:#1f1f1f;font-weight:normal;text-align:center;-webkit-text-stroke:0.1px #1f1f1f"><span style="display:inline-block;transform:scaleX(0.91);transform-origin:50% 50%">-6</span></div>
<div class="t" style="left:248.00px;top:194.43px;width:100px;height:20px;line-height:20px;font-size:6.6px;color:#1f1f1f;font-weight:normal;text-align:center;-webkit-text-stroke:0.1px #1f1f1f"><span style="display:inline-block;transform:scaleX(0.91);transform-origin:50% 50%">Quá hạn</span></div>
<div class="t" style="left:602.00px;top:194.43px;width:120px;height:20px;line-height:20px;font-size:6.6px;color:#1f1f1f;font-weight:normal;text-align:center;-webkit-text-stroke:0.1px #1f1f1f"><span style="display:inline-block;transform:scaleX(0.91);transform-origin:50% 50%">Đợi phản hồi nội dung</span></div>
<svg class="a" style="left:129.10px;top:202.62px;overflow:visible" width="4.40" height="2.20" viewBox="0 0 2 1" preserveAspectRatio="none"><path d="M0 0H2L1 1z" fill="#6d7be8"/></svg>
<div class="a" style="left:20.60px;top:203.12px;width:0.80px;height:0.80px;background:#8a94ef"></div>
<div class="t" style="left:73.70px;top:205.16px;width:60px;height:20px;line-height:20px;font-size:6.6px;color:#1f1f1f;font-weight:normal;text-align:center;-webkit-text-stroke:0.1px #1f1f1f"><span style="display:inline-block;transform:scaleX(0.91);transform-origin:50% 50%">Phát triển</span></div>
<div class="t" style="left:122.50px;top:205.16px;width:100px;height:20px;line-height:20px;font-size:6.6px;color:#1f1f1f;font-weight:normal;text-align:center;-webkit-text-stroke:0.1px #1f1f1f"><span style="display:inline-block;transform:scaleX(0.91);transform-origin:50% 50%">50%</span></div>
<div class="t" style="left:186.75px;top:205.16px;width:100px;height:20px;line-height:20px;font-size:6.6px;color:#1f1f1f;font-weight:normal;text-align:center;-webkit-text-stroke:0.1px #1f1f1f"><span style="display:inline-block;transform:scaleX(0.91);transform-origin:50% 50%">-3</span></div>
<div class="t" style="left:248.00px;top:205.16px;width:100px;height:20px;line-height:20px;font-size:6.6px;color:#1f1f1f;font-weight:normal;text-align:center;-webkit-text-stroke:0.1px #1f1f1f"><span style="display:inline-block;transform:scaleX(0.91);transform-origin:50% 50%">Quá hạn</span></div>
<svg class="a" style="left:129.10px;top:213.36px;overflow:visible" width="4.40" height="2.20" viewBox="0 0 2 1" preserveAspectRatio="none"><path d="M0 0H2L1 1z" fill="#6d7be8"/></svg>
<div class="a" style="left:20.60px;top:213.86px;width:0.80px;height:0.80px;background:#8a94ef"></div>
<div class="t" style="left:73.70px;top:215.89px;width:60px;height:20px;line-height:20px;font-size:6.6px;color:#1f1f1f;font-weight:normal;text-align:center;-webkit-text-stroke:0.1px #1f1f1f"><span style="display:inline-block;transform:scaleX(0.91);transform-origin:50% 50%">Phát triển</span></div>
<div class="t" style="left:122.50px;top:215.89px;width:100px;height:20px;line-height:20px;font-size:6.6px;color:#1f1f1f;font-weight:normal;text-align:center;-webkit-text-stroke:0.1px #1f1f1f"><span style="display:inline-block;transform:scaleX(0.91);transform-origin:50% 50%">40%</span></div>
<div class="t" style="left:186.75px;top:215.89px;width:100px;height:20px;line-height:20px;font-size:6.6px;color:#1f1f1f;font-weight:normal;text-align:center;-webkit-text-stroke:0.1px #1f1f1f"><span style="display:inline-block;transform:scaleX(0.91);transform-origin:50% 50%">-7</span></div>
<div class="t" style="left:248.00px;top:215.89px;width:100px;height:20px;line-height:20px;font-size:6.6px;color:#1f1f1f;font-weight:normal;text-align:center;-webkit-text-stroke:0.1px #1f1f1f"><span style="display:inline-block;transform:scaleX(0.91);transform-origin:50% 50%">Quá hạn</span></div>
<svg class="a" style="left:129.10px;top:224.09px;overflow:visible" width="4.40" height="2.20" viewBox="0 0 2 1" preserveAspectRatio="none"><path d="M0 0H2L1 1z" fill="#6d7be8"/></svg>
<div class="a" style="left:20.60px;top:224.59px;width:0.80px;height:0.80px;background:#8a94ef"></div>
<div class="t" style="left:73.70px;top:226.62px;width:60px;height:20px;line-height:20px;font-size:6.6px;color:#1f1f1f;font-weight:normal;text-align:center;-webkit-text-stroke:0.1px #1f1f1f"><span style="display:inline-block;transform:scaleX(0.91);transform-origin:50% 50%">Kiểm thử</span></div>
<div class="t" style="left:122.50px;top:226.62px;width:100px;height:20px;line-height:20px;font-size:6.6px;color:#1f1f1f;font-weight:normal;text-align:center;-webkit-text-stroke:0.1px #1f1f1f"><span style="display:inline-block;transform:scaleX(0.91);transform-origin:50% 50%">0%</span></div>
<div class="t" style="left:186.75px;top:226.62px;width:100px;height:20px;line-height:20px;font-size:6.6px;color:#1f1f1f;font-weight:normal;text-align:center;-webkit-text-stroke:0.1px #1f1f1f"><span style="display:inline-block;transform:scaleX(0.91);transform-origin:50% 50%">-5</span></div>
<div class="t" style="left:248.00px;top:226.62px;width:100px;height:20px;line-height:20px;font-size:6.6px;color:#1f1f1f;font-weight:normal;text-align:center;-webkit-text-stroke:0.1px #1f1f1f"><span style="display:inline-block;transform:scaleX(0.91);transform-origin:50% 50%">Quá hạn</span></div>
<svg class="a" style="left:129.10px;top:234.81px;overflow:visible" width="4.40" height="2.20" viewBox="0 0 2 1" preserveAspectRatio="none"><path d="M0 0H2L1 1z" fill="#6d7be8"/></svg>
<div class="a" style="left:20.60px;top:235.31px;width:0.80px;height:0.80px;background:#8a94ef"></div>
<div class="t" style="left:73.70px;top:237.35px;width:60px;height:20px;line-height:20px;font-size:6.6px;color:#1f1f1f;font-weight:normal;text-align:center;-webkit-text-stroke:0.1px #1f1f1f"><span style="display:inline-block;transform:scaleX(0.91);transform-origin:50% 50%">Nội dung</span></div>
<div class="t" style="left:122.50px;top:237.35px;width:100px;height:20px;line-height:20px;font-size:6.6px;color:#1f1f1f;font-weight:normal;text-align:center;-webkit-text-stroke:0.1px #1f1f1f"><span style="display:inline-block;transform:scaleX(0.91);transform-origin:50% 50%">70%</span></div>
<div class="t" style="left:186.75px;top:237.35px;width:100px;height:20px;line-height:20px;font-size:6.6px;color:#1f1f1f;font-weight:normal;text-align:center;-webkit-text-stroke:0.1px #1f1f1f"><span style="display:inline-block;transform:scaleX(0.91);transform-origin:50% 50%">-9</span></div>
<div class="t" style="left:248.00px;top:237.35px;width:100px;height:20px;line-height:20px;font-size:6.6px;color:#1f1f1f;font-weight:normal;text-align:center;-webkit-text-stroke:0.1px #1f1f1f"><span style="display:inline-block;transform:scaleX(0.91);transform-origin:50% 50%">Quá hạn</span></div>
<div class="t" style="left:602.00px;top:237.35px;width:120px;height:20px;line-height:20px;font-size:6.6px;color:#1f1f1f;font-weight:normal;text-align:center;-webkit-text-stroke:0.1px #1f1f1f"><span style="display:inline-block;transform:scaleX(0.91);transform-origin:50% 50%">Chờ duyệt từ ban giám đốc</span></div>
<svg class="a" style="left:129.10px;top:245.55px;overflow:visible" width="4.40" height="2.20" viewBox="0 0 2 1" preserveAspectRatio="none"><path d="M0 0H2L1 1z" fill="#6d7be8"/></svg>
<div class="a" style="left:20.60px;top:246.05px;width:0.80px;height:0.80px;background:#8a94ef"></div>
<div class="t" style="left:73.70px;top:248.08px;width:60px;height:20px;line-height:20px;font-size:6.6px;color:#1f1f1f;font-weight:normal;text-align:center;-webkit-text-stroke:0.1px #1f1f1f"><span style="display:inline-block;transform:scaleX(0.91);transform-origin:50% 50%">Nội dung</span></div>
<div class="t" style="left:122.50px;top:248.08px;width:100px;height:20px;line-height:20px;font-size:6.6px;color:#1f1f1f;font-weight:normal;text-align:center;-webkit-text-stroke:0.1px #1f1f1f"><span style="display:inline-block;transform:scaleX(0.91);transform-origin:50% 50%">0%</span></div>
<div class="t" style="left:186.75px;top:248.08px;width:100px;height:20px;line-height:20px;font-size:6.6px;color:#1f1f1f;font-weight:normal;text-align:center;-webkit-text-stroke:0.1px #1f1f1f"><span style="display:inline-block;transform:scaleX(0.91);transform-origin:50% 50%">-1</span></div>
<div class="t" style="left:248.00px;top:248.08px;width:100px;height:20px;line-height:20px;font-size:6.6px;color:#1f1f1f;font-weight:normal;text-align:center;-webkit-text-stroke:0.1px #1f1f1f"><span style="display:inline-block;transform:scaleX(0.91);transform-origin:50% 50%">Quá hạn</span></div>
<div class="t" style="left:456.25px;top:248.08px;width:100px;height:20px;line-height:20px;font-size:6.6px;color:#1f1f1f;font-weight:normal;text-align:center;-webkit-text-stroke:0.1px #1f1f1f"><span style="display:inline-block;transform:scaleX(0.91);transform-origin:50% 50%">2026-02-17 16:38:23</span></div>
<div class="t" style="left:525.25px;top:248.08px;width:100px;height:20px;line-height:20px;font-size:6.6px;color:#1f1f1f;font-weight:normal;text-align:center;-webkit-text-stroke:0.1px #1f1f1f"><span style="display:inline-block;transform:scaleX(0.91);transform-origin:50% 50%">17/02/2026 16:38</span></div>
<svg class="a" style="left:129.10px;top:256.28px;overflow:visible" width="4.40" height="2.20" viewBox="0 0 2 1" preserveAspectRatio="none"><path d="M0 0H2L1 1z" fill="#6d7be8"/></svg>
<div class="a" style="left:20.60px;top:256.78px;width:0.80px;height:0.80px;background:#8a94ef"></div>
<div class="t" style="left:73.70px;top:258.81px;width:60px;height:20px;line-height:20px;font-size:6.6px;color:#c8c8c8;font-weight:normal;text-align:center;-webkit-text-stroke:0.1px #c8c8c8"><span style="display:inline-block;transform:scaleX(0.91);transform-origin:50% 50%">Lập kế hoạch</span></div>
<div class="t" style="left:122.50px;top:258.81px;width:100px;height:20px;line-height:20px;font-size:6.6px;color:#c8c8c8;font-weight:normal;text-align:center;-webkit-text-stroke:0.1px #c8c8c8"><span style="display:inline-block;transform:scaleX(0.91);transform-origin:50% 50%">100%</span></div>
<div class="t" style="left:186.75px;top:258.81px;width:100px;height:20px;line-height:20px;font-size:6.6px;color:#c8c8c8;font-weight:normal;text-align:center;-webkit-text-stroke:0.1px #c8c8c8"><span style="display:inline-block;transform:scaleX(0.91);transform-origin:50% 50%">-20</span></div>
<div class="t" style="left:248.00px;top:258.81px;width:100px;height:20px;line-height:20px;font-size:6.6px;color:#c8c8c8;font-weight:normal;text-align:center;-webkit-text-stroke:0.1px #c8c8c8"><span style="display:inline-block;transform:scaleX(0.91);transform-origin:50% 50%">Hoàn thành</span></div>
<svg class="a" style="left:129.10px;top:267.01px;overflow:visible" width="4.40" height="2.20" viewBox="0 0 2 1" preserveAspectRatio="none"><path d="M0 0H2L1 1z" fill="#555"/></svg>
<div class="a" style="left:20.60px;top:267.51px;width:0.80px;height:0.80px;background:#666"></div>
<div class="t" style="left:73.70px;top:269.54px;width:60px;height:20px;line-height:20px;font-size:6.6px;color:#c8c8c8;font-weight:normal;text-align:center;-webkit-text-stroke:0.1px #c8c8c8"><span style="display:inline-block;transform:scaleX(0.91);transform-origin:50% 50%">Thiết kế</span></div>
<div class="t" style="left:122.50px;top:269.54px;width:100px;height:20px;line-height:20px;font-size:6.6px;color:#c8c8c8;font-weight:normal;text-align:center;-webkit-text-stroke:0.1px #c8c8c8"><span style="display:inline-block;transform:scaleX(0.91);transform-origin:50% 50%">100%</span></div>
<div class="t" style="left:186.75px;top:269.54px;width:100px;height:20px;line-height:20px;font-size:6.6px;color:#c8c8c8;font-weight:normal;text-align:center;-webkit-text-stroke:0.1px #c8c8c8"><span style="display:inline-block;transform:scaleX(0.91);transform-origin:50% 50%">-14</span></div>
<div class="t" style="left:248.00px;top:269.54px;width:100px;height:20px;line-height:20px;font-size:6.6px;color:#c8c8c8;font-weight:normal;text-align:center;-webkit-text-stroke:0.1px #c8c8c8"><span style="display:inline-block;transform:scaleX(0.91);transform-origin:50% 50%">Hoàn thành</span></div>
<svg class="a" style="left:129.10px;top:277.74px;overflow:visible" width="4.40" height="2.20" viewBox="0 0 2 1" preserveAspectRatio="none"><path d="M0 0H2L1 1z" fill="#555"/></svg>
<div class="a" style="left:20.60px;top:278.24px;width:0.80px;height:0.80px;background:#666"></div>
<div class="t" style="left:73.70px;top:280.26px;width:60px;height:20px;line-height:20px;font-size:6.6px;color:#1f1f1f;font-weight:normal;text-align:center;-webkit-text-stroke:0.1px #1f1f1f"><span style="display:inline-block;transform:scaleX(0.91);transform-origin:50% 50%">Nội dung</span></div>
<div class="t" style="left:122.50px;top:280.26px;width:100px;height:20px;line-height:20px;font-size:6.6px;color:#1f1f1f;font-weight:normal;text-align:center;-webkit-text-stroke:0.1px #1f1f1f"><span style="display:inline-block;transform:scaleX(0.91);transform-origin:50% 50%">50%</span></div>
<div class="t" style="left:186.75px;top:280.26px;width:100px;height:20px;line-height:20px;font-size:6.6px;color:#1f1f1f;font-weight:normal;text-align:center;-webkit-text-stroke:0.1px #1f1f1f"><span style="display:inline-block;transform:scaleX(0.91);transform-origin:50% 50%">-7</span></div>
<div class="t" style="left:248.00px;top:280.26px;width:100px;height:20px;line-height:20px;font-size:6.6px;color:#1f1f1f;font-weight:normal;text-align:center;-webkit-text-stroke:0.1px #1f1f1f"><span style="display:inline-block;transform:scaleX(0.91);transform-origin:50% 50%">Quá hạn</span></div>
<svg class="a" style="left:129.10px;top:288.46px;overflow:visible" width="4.40" height="2.20" viewBox="0 0 2 1" preserveAspectRatio="none"><path d="M0 0H2L1 1z" fill="#6d7be8"/></svg>
<div class="a" style="left:20.60px;top:288.96px;width:0.80px;height:0.80px;background:#8a94ef"></div>
<div class="t" style="left:73.70px;top:291.00px;width:60px;height:20px;line-height:20px;font-size:6.6px;color:#1f1f1f;font-weight:normal;text-align:center;-webkit-text-stroke:0.1px #1f1f1f"><span style="display:inline-block;transform:scaleX(0.91);transform-origin:50% 50%">Triển khai</span></div>
<div class="t" style="left:122.50px;top:291.00px;width:100px;height:20px;line-height:20px;font-size:6.6px;color:#1f1f1f;font-weight:normal;text-align:center;-webkit-text-stroke:0.1px #1f1f1f"><span style="display:inline-block;transform:scaleX(0.91);transform-origin:50% 50%">40%</span></div>
<div class="t" style="left:186.75px;top:291.00px;width:100px;height:20px;line-height:20px;font-size:6.6px;color:#1f1f1f;font-weight:normal;text-align:center;-webkit-text-stroke:0.1px #1f1f1f"><span style="display:inline-block;transform:scaleX(0.91);transform-origin:50% 50%">-6</span></div>
<div class="t" style="left:248.00px;top:291.00px;width:100px;height:20px;line-height:20px;font-size:6.6px;color:#1f1f1f;font-weight:normal;text-align:center;-webkit-text-stroke:0.1px #1f1f1f"><span style="display:inline-block;transform:scaleX(0.91);transform-origin:50% 50%">Quá hạn</span></div>
<svg class="a" style="left:129.10px;top:299.19px;overflow:visible" width="4.40" height="2.20" viewBox="0 0 2 1" preserveAspectRatio="none"><path d="M0 0H2L1 1z" fill="#6d7be8"/></svg>
<div class="a" style="left:20.60px;top:299.69px;width:0.80px;height:0.80px;background:#8a94ef"></div>
<div class="t" style="left:73.70px;top:301.73px;width:60px;height:20px;line-height:20px;font-size:6.6px;color:#fff;font-weight:normal;text-align:center;-webkit-text-stroke:0.1px #fff"><span style="display:inline-block;transform:scaleX(0.91);transform-origin:50% 50%">Khác</span></div>
<div class="t" style="left:122.50px;top:301.73px;width:100px;height:20px;line-height:20px;font-size:6.6px;color:#fff;font-weight:normal;text-align:center;-webkit-text-stroke:0.1px #fff"><span style="display:inline-block;transform:scaleX(0.91);transform-origin:50% 50%">20%</span></div>
<div class="t" style="left:186.75px;top:301.73px;width:100px;height:20px;line-height:20px;font-size:6.6px;color:#fff;font-weight:normal;text-align:center;-webkit-text-stroke:0.1px #fff"><span style="display:inline-block;transform:scaleX(0.91);transform-origin:50% 50%">2</span></div>
<div class="t" style="left:248.00px;top:301.73px;width:100px;height:20px;line-height:20px;font-size:6.6px;color:#fff;font-weight:normal;text-align:center;-webkit-text-stroke:0.1px #fff"><span style="display:inline-block;transform:scaleX(0.91);transform-origin:50% 50%">Sắp đến hạn</span></div>
<div class="t" style="left:316.00px;top:301.73px;width:100px;height:20px;line-height:20px;font-size:6.6px;color:#fff;font-weight:normal;text-align:center;-webkit-text-stroke:0.1px #fff"><span style="display:inline-block;transform:scaleX(0.91);transform-origin:50% 50%">2026-02-17 16:38:23</span></div>
<div class="t" style="left:525.25px;top:301.73px;width:100px;height:20px;line-height:20px;font-size:6.6px;color:#fff;font-weight:normal;text-align:center;-webkit-text-stroke:0.1px #fff"><span style="display:inline-block;transform:scaleX(0.91);transform-origin:50% 50%">17/02/2026 16:38</span></div>
<svg class="a" style="left:129.10px;top:309.93px;overflow:visible" width="4.40" height="2.20" viewBox="0 0 2 1" preserveAspectRatio="none"><path d="M0 0H2L1 1z" fill="#2b2b2b"/></svg>
<div class="a" style="left:20.60px;top:310.43px;width:0.80px;height:0.80px;background:#666"></div>
<div class="t" style="left:73.70px;top:312.46px;width:60px;height:20px;line-height:20px;font-size:6.6px;color:#1f1f1f;font-weight:normal;text-align:center;-webkit-text-stroke:0.1px #1f1f1f"><span style="display:inline-block;transform:scaleX(0.91);transform-origin:50% 50%">Họp</span></div>
<div class="t" style="left:122.50px;top:312.46px;width:100px;height:20px;line-height:20px;font-size:6.6px;color:#1f1f1f;font-weight:normal;text-align:center;-webkit-text-stroke:0.1px #1f1f1f"><span style="display:inline-block;transform:scaleX(0.91);transform-origin:50% 50%">20%</span></div>
<div class="t" style="left:186.75px;top:312.46px;width:100px;height:20px;line-height:20px;font-size:6.6px;color:#1f1f1f;font-weight:normal;text-align:center;-webkit-text-stroke:0.1px #1f1f1f"><span style="display:inline-block;transform:scaleX(0.91);transform-origin:50% 50%">-10</span></div>
<div class="t" style="left:248.00px;top:312.46px;width:100px;height:20px;line-height:20px;font-size:6.6px;color:#1f1f1f;font-weight:normal;text-align:center;-webkit-text-stroke:0.1px #1f1f1f"><span style="display:inline-block;transform:scaleX(0.91);transform-origin:50% 50%">Quá hạn</span></div>
<div class="t" style="left:602.00px;top:312.46px;width:120px;height:20px;line-height:20px;font-size:6.6px;color:#1f1f1f;font-weight:normal;text-align:center;-webkit-text-stroke:0.1px #1f1f1f"><span style="display:inline-block;transform:scaleX(0.91);transform-origin:50% 50%">Chờ thống nhất SLA với sales</span></div>
<svg class="a" style="left:129.10px;top:320.66px;overflow:visible" width="4.40" height="2.20" viewBox="0 0 2 1" preserveAspectRatio="none"><path d="M0 0H2L1 1z" fill="#6d7be8"/></svg>
<div class="a" style="left:20.60px;top:321.16px;width:0.80px;height:0.80px;background:#8a94ef"></div>
<div class="t" style="left:73.70px;top:323.19px;width:60px;height:20px;line-height:20px;font-size:6.6px;color:#1f1f1f;font-weight:normal;text-align:center;-webkit-text-stroke:0.1px #1f1f1f"><span style="display:inline-block;transform:scaleX(0.91);transform-origin:50% 50%">Lập kế hoạch</span></div>
<div class="t" style="left:122.50px;top:323.19px;width:100px;height:20px;line-height:20px;font-size:6.6px;color:#1f1f1f;font-weight:normal;text-align:center;-webkit-text-stroke:0.1px #1f1f1f"><span style="display:inline-block;transform:scaleX(0.91);transform-origin:50% 50%">40%</span></div>
<div class="t" style="left:186.75px;top:323.19px;width:100px;height:20px;line-height:20px;font-size:6.6px;color:#1f1f1f;font-weight:normal;text-align:center;-webkit-text-stroke:0.1px #1f1f1f"><span style="display:inline-block;transform:scaleX(0.91);transform-origin:50% 50%">-5</span></div>
<div class="t" style="left:248.00px;top:323.19px;width:100px;height:20px;line-height:20px;font-size:6.6px;color:#1f1f1f;font-weight:normal;text-align:center;-webkit-text-stroke:0.1px #1f1f1f"><span style="display:inline-block;transform:scaleX(0.91);transform-origin:50% 50%">Quá hạn</span></div>
<svg class="a" style="left:129.10px;top:331.39px;overflow:visible" width="4.40" height="2.20" viewBox="0 0 2 1" preserveAspectRatio="none"><path d="M0 0H2L1 1z" fill="#6d7be8"/></svg>
<div class="a" style="left:20.60px;top:331.89px;width:0.80px;height:0.80px;background:#8a94ef"></div>
<div class="t" style="left:73.70px;top:333.92px;width:60px;height:20px;line-height:20px;font-size:6.6px;color:#fff;font-weight:normal;text-align:center;-webkit-text-stroke:0.1px #fff"><span style="display:inline-block;transform:scaleX(0.91);transform-origin:50% 50%">Nội dung</span></div>
<div class="t" style="left:122.50px;top:333.92px;width:100px;height:20px;line-height:20px;font-size:6.6px;color:#fff;font-weight:normal;text-align:center;-webkit-text-stroke:0.1px #fff"><span style="display:inline-block;transform:scaleX(0.91);transform-origin:50% 50%">0%</span></div>
<div class="t" style="left:186.75px;top:333.92px;width:100px;height:20px;line-height:20px;font-size:6.6px;color:#fff;font-weight:normal;text-align:center;-webkit-text-stroke:0.1px #fff"><span style="display:inline-block;transform:scaleX(0.91);transform-origin:50% 50%">0</span></div>
<div class="t" style="left:248.00px;top:333.92px;width:100px;height:20px;line-height:20px;font-size:6.6px;color:#fff;font-weight:normal;text-align:center;-webkit-text-stroke:0.1px #fff"><span style="display:inline-block;transform:scaleX(0.91);transform-origin:50% 50%">Đến hạn hôm nay</span></div>
<div class="t" style="left:385.25px;top:333.92px;width:100px;height:20px;line-height:20px;font-size:6.6px;color:#fff;font-weight:normal;text-align:center;-webkit-text-stroke:0.1px #fff"><span style="display:inline-block;transform:scaleX(0.91);transform-origin:50% 50%">2026-02-17 16:38:23</span></div>
<div class="t" style="left:456.25px;top:333.92px;width:100px;height:20px;line-height:20px;font-size:6.6px;color:#fff;font-weight:normal;text-align:center;-webkit-text-stroke:0.1px #fff"><span style="display:inline-block;transform:scaleX(0.91);transform-origin:50% 50%">2026-02-18 07:20:12</span></div>
<div class="t" style="left:525.25px;top:333.92px;width:100px;height:20px;line-height:20px;font-size:6.6px;color:#fff;font-weight:normal;text-align:center;-webkit-text-stroke:0.1px #fff"><span style="display:inline-block;transform:scaleX(0.91);transform-origin:50% 50%">18/02/2026 07:20</span></div>
<svg class="a" style="left:129.10px;top:342.12px;overflow:visible" width="4.40" height="2.20" viewBox="0 0 2 1" preserveAspectRatio="none"><path d="M0 0H2L1 1z" fill="#2b2b2b"/></svg>
<div class="a" style="left:20.60px;top:342.62px;width:0.80px;height:0.80px;background:#666"></div>
<div class="t" style="left:73.70px;top:344.64px;width:60px;height:20px;line-height:20px;font-size:6.6px;color:#1f1f1f;font-weight:normal;text-align:center;-webkit-text-stroke:0.1px #1f1f1f"><span style="display:inline-block;transform:scaleX(0.91);transform-origin:50% 50%">Phát triển</span></div>
<div class="t" style="left:122.50px;top:344.64px;width:100px;height:20px;line-height:20px;font-size:6.6px;color:#1f1f1f;font-weight:normal;text-align:center;-webkit-text-stroke:0.1px #1f1f1f"><span style="display:inline-block;transform:scaleX(0.91);transform-origin:50% 50%">0%</span></div>
<div class="t" style="left:186.75px;top:344.64px;width:100px;height:20px;line-height:20px;font-size:6.6px;color:#1f1f1f;font-weight:normal;text-align:center;-webkit-text-stroke:0.1px #1f1f1f"><span style="display:inline-block;transform:scaleX(0.91);transform-origin:50% 50%">-2</span></div>
<div class="t" style="left:248.00px;top:344.64px;width:100px;height:20px;line-height:20px;font-size:6.6px;color:#1f1f1f;font-weight:normal;text-align:center;-webkit-text-stroke:0.1px #1f1f1f"><span style="display:inline-block;transform:scaleX(0.91);transform-origin:50% 50%">Quá hạn</span></div>
<svg class="a" style="left:129.10px;top:352.84px;overflow:visible" width="4.40" height="2.20" viewBox="0 0 2 1" preserveAspectRatio="none"><path d="M0 0H2L1 1z" fill="#6d7be8"/></svg>
<div class="a" style="left:20.60px;top:353.34px;width:0.80px;height:0.80px;background:#8a94ef"></div>
<div class="t" style="left:73.70px;top:355.38px;width:60px;height:20px;line-height:20px;font-size:6.6px;color:#1f1f1f;font-weight:normal;text-align:center;-webkit-text-stroke:0.1px #1f1f1f"><span style="display:inline-block;transform:scaleX(0.91);transform-origin:50% 50%">Khác</span></div>
<div class="t" style="left:122.50px;top:355.38px;width:100px;height:20px;line-height:20px;font-size:6.6px;color:#1f1f1f;font-weight:normal;text-align:center;-webkit-text-stroke:0.1px #1f1f1f"><span style="display:inline-block;transform:scaleX(0.91);transform-origin:50% 50%">30%</span></div>
<div class="t" style="left:186.75px;top:355.38px;width:100px;height:20px;line-height:20px;font-size:6.6px;color:#1f1f1f;font-weight:normal;text-align:center;-webkit-text-stroke:0.1px #1f1f1f"><span style="display:inline-block;transform:scaleX(0.91);transform-origin:50% 50%">-4</span></div>
<div class="t" style="left:248.00px;top:355.38px;width:100px;height:20px;line-height:20px;font-size:6.6px;color:#1f1f1f;font-weight:normal;text-align:center;-webkit-text-stroke:0.1px #1f1f1f"><span style="display:inline-block;transform:scaleX(0.91);transform-origin:50% 50%">Quá hạn</span></div>
<svg class="a" style="left:129.10px;top:363.57px;overflow:visible" width="4.40" height="2.20" viewBox="0 0 2 1" preserveAspectRatio="none"><path d="M0 0H2L1 1z" fill="#6d7be8"/></svg>
<div class="a" style="left:20.60px;top:364.07px;width:0.80px;height:0.80px;background:#8a94ef"></div>
<div class="t" style="left:73.70px;top:365.50px;width:60px;height:20px;line-height:20px;font-size:6.6px;color:#1f1f1f;font-weight:normal;text-align:center;-webkit-text-stroke:0.1px #1f1f1f"><span style="display:inline-block;transform:scaleX(0.91);transform-origin:50% 50%">Nội dung</span></div>
<div class="t" style="left:122.50px;top:365.50px;width:100px;height:20px;line-height:20px;font-size:6.6px;color:#1f1f1f;font-weight:normal;text-align:center;-webkit-text-stroke:0.1px #1f1f1f"><span style="display:inline-block;transform:scaleX(0.91);transform-origin:50% 50%">0%</span></div>
<div class="t" style="left:186.75px;top:365.50px;width:100px;height:20px;line-height:20px;font-size:6.6px;color:#1f1f1f;font-weight:normal;text-align:center;-webkit-text-stroke:0.1px #1f1f1f"><span style="display:inline-block;transform:scaleX(0.91);transform-origin:50% 50%">4</span></div>
<div class="t" style="left:248.00px;top:365.50px;width:100px;height:20px;line-height:20px;font-size:6.6px;color:#1f1f1f;font-weight:normal;text-align:center;-webkit-text-stroke:0.1px #1f1f1f"><span style="display:inline-block;transform:scaleX(0.91);transform-origin:50% 50%">Đến hạn trong 7 ngày</span></div>
<svg class="a" style="left:129.10px;top:373.70px;overflow:visible" width="4.40" height="2.20" viewBox="0 0 2 1" preserveAspectRatio="none"><path d="M0 0H2L1 1z" fill="#555"/></svg>
<div class="a" style="left:20.60px;top:374.20px;width:0.80px;height:0.80px;background:#666"></div>
<div class="a" style="left:20.2px;top:187.23px;width:685.3px;height:1px;background:repeating-linear-gradient(90deg,rgba(40,40,55,.25) 0 2px,rgba(40,40,55,.09) 2px 3px)"></div>
<div class="a" style="left:20.2px;top:197.96px;width:685.3px;height:1px;background:repeating-linear-gradient(90deg,rgba(40,40,55,.25) 0 2px,rgba(40,40,55,.09) 2px 3px)"></div>
<div class="a" style="left:20.2px;top:208.69px;width:685.3px;height:1px;background:repeating-linear-gradient(90deg,rgba(40,40,55,.25) 0 2px,rgba(40,40,55,.09) 2px 3px)"></div>
<div class="a" style="left:20.2px;top:219.42px;width:685.3px;height:1px;background:repeating-linear-gradient(90deg,rgba(40,40,55,.25) 0 2px,rgba(40,40,55,.09) 2px 3px)"></div>
<div class="a" style="left:20.2px;top:230.15px;width:685.3px;height:1px;background:repeating-linear-gradient(90deg,rgba(40,40,55,.25) 0 2px,rgba(40,40,55,.09) 2px 3px)"></div>
<div class="a" style="left:20.2px;top:240.88px;width:685.3px;height:1px;background:repeating-linear-gradient(90deg,rgba(40,40,55,.25) 0 2px,rgba(40,40,55,.09) 2px 3px)"></div>
<div class="a" style="left:20.2px;top:251.61px;width:685.3px;height:1px;background:repeating-linear-gradient(90deg,rgba(40,40,55,.25) 0 2px,rgba(40,40,55,.09) 2px 3px)"></div>
<div class="a" style="left:20.2px;top:262.34px;width:685.3px;height:1px;background:repeating-linear-gradient(90deg,rgba(40,40,55,.25) 0 2px,rgba(40,40,55,.09) 2px 3px)"></div>
<div class="a" style="left:20.2px;top:273.07px;width:685.3px;height:1px;background:repeating-linear-gradient(90deg,rgba(40,40,55,.25) 0 2px,rgba(40,40,55,.09) 2px 3px)"></div>
<div class="a" style="left:20.2px;top:283.80px;width:685.3px;height:1px;background:repeating-linear-gradient(90deg,rgba(40,40,55,.25) 0 2px,rgba(40,40,55,.09) 2px 3px)"></div>
<div class="a" style="left:20.2px;top:294.53px;width:685.3px;height:1px;background:repeating-linear-gradient(90deg,rgba(40,40,55,.25) 0 2px,rgba(40,40,55,.09) 2px 3px)"></div>
<div class="a" style="left:20.2px;top:305.26px;width:685.3px;height:1px;background:repeating-linear-gradient(90deg,rgba(40,40,55,.25) 0 2px,rgba(40,40,55,.09) 2px 3px)"></div>
<div class="a" style="left:20.2px;top:315.99px;width:685.3px;height:1px;background:repeating-linear-gradient(90deg,rgba(40,40,55,.25) 0 2px,rgba(40,40,55,.09) 2px 3px)"></div>
<div class="a" style="left:20.2px;top:326.72px;width:685.3px;height:1px;background:repeating-linear-gradient(90deg,rgba(40,40,55,.25) 0 2px,rgba(40,40,55,.09) 2px 3px)"></div>
<div class="a" style="left:20.2px;top:337.45px;width:685.3px;height:1px;background:repeating-linear-gradient(90deg,rgba(40,40,55,.25) 0 2px,rgba(40,40,55,.09) 2px 3px)"></div>
<div class="a" style="left:20.2px;top:348.18px;width:685.3px;height:1px;background:repeating-linear-gradient(90deg,rgba(40,40,55,.25) 0 2px,rgba(40,40,55,.09) 2px 3px)"></div>
<div class="a" style="left:20.2px;top:358.91px;width:685.3px;height:1px;background:repeating-linear-gradient(90deg,rgba(40,40,55,.25) 0 2px,rgba(40,40,55,.09) 2px 3px)"></div>
<div class="a" style="left:20.2px;top:369.64px;width:685.3px;height:1px;background:repeating-linear-gradient(90deg,rgba(40,40,55,.25) 0 2px,rgba(40,40,55,.09) 2px 3px)"></div>
<div class="a" style="left:23.50px;top:177px;width:1px;height:200.6px;background:repeating-linear-gradient(180deg,rgba(40,40,55,.34) 0 2px,rgba(40,40,55,.12) 2px 3px)"></div>
<div class="a" style="left:23.50px;top:153.00px;width:1.00px;height:24.00px;background:#6a36a8;opacity:.8"></div>
<div class="a" style="left:79.50px;top:177px;width:1px;height:200.6px;background:repeating-linear-gradient(180deg,rgba(40,40,55,.34) 0 2px,rgba(40,40,55,.12) 2px 3px)"></div>
<div class="a" style="left:79.50px;top:153.00px;width:1.00px;height:24.00px;background:#6a36a8;opacity:.8"></div>
<div class="a" style="left:135.50px;top:177px;width:1px;height:200.6px;background:repeating-linear-gradient(180deg,rgba(40,40,55,.34) 0 2px,rgba(40,40,55,.12) 2px 3px)"></div>
<div class="a" style="left:135.50px;top:153.00px;width:1.00px;height:24.00px;background:#6a36a8;opacity:.8"></div>
<div class="a" style="left:207.50px;top:177px;width:1px;height:200.6px;background:repeating-linear-gradient(180deg,rgba(40,40,55,.34) 0 2px,rgba(40,40,55,.12) 2px 3px)"></div>
<div class="a" style="left:207.50px;top:153.00px;width:1.00px;height:24.00px;background:#6a36a8;opacity:.8"></div>
<div class="a" style="left:264.00px;top:177px;width:1px;height:200.6px;background:repeating-linear-gradient(180deg,rgba(40,40,55,.34) 0 2px,rgba(40,40,55,.12) 2px 3px)"></div>
<div class="a" style="left:264.00px;top:153.00px;width:1.00px;height:24.00px;background:#6a36a8;opacity:.8"></div>
<div class="a" style="left:330.00px;top:177px;width:1px;height:200.6px;background:repeating-linear-gradient(180deg,rgba(40,40,55,.34) 0 2px,rgba(40,40,55,.12) 2px 3px)"></div>
<div class="a" style="left:330.00px;top:153.00px;width:1.00px;height:24.00px;background:#6a36a8;opacity:.8"></div>
<div class="a" style="left:400.00px;top:177px;width:1px;height:200.6px;background:repeating-linear-gradient(180deg,rgba(40,40,55,.34) 0 2px,rgba(40,40,55,.12) 2px 3px)"></div>
<div class="a" style="left:400.00px;top:153.00px;width:1.00px;height:24.00px;background:#6a36a8;opacity:.8"></div>
<div class="a" style="left:468.50px;top:177px;width:1px;height:200.6px;background:repeating-linear-gradient(180deg,rgba(40,40,55,.34) 0 2px,rgba(40,40,55,.12) 2px 3px)"></div>
<div class="a" style="left:468.50px;top:153.00px;width:1.00px;height:24.00px;background:#6a36a8;opacity:.8"></div>
<div class="a" style="left:542.00px;top:177px;width:1px;height:200.6px;background:repeating-linear-gradient(180deg,rgba(40,40,55,.34) 0 2px,rgba(40,40,55,.12) 2px 3px)"></div>
<div class="a" style="left:542.00px;top:153.00px;width:1.00px;height:24.00px;background:#6a36a8;opacity:.8"></div>
<div class="a" style="left:606.50px;top:177px;width:1px;height:200.6px;background:repeating-linear-gradient(180deg,rgba(40,40,55,.34) 0 2px,rgba(40,40,55,.12) 2px 3px)"></div>
<div class="a" style="left:606.50px;top:153.00px;width:1.00px;height:24.00px;background:#6a36a8;opacity:.8"></div>
<div class="t" style="left:17.80px;top:148.30px;width:60px;height:20px;line-height:20px;font-size:5.55px;color:#fff;font-weight:bold;text-align:center;-webkit-text-stroke:0.22px #fff">Số lần sửa / Số</div>
<div class="t" style="left:17.80px;top:155.60px;width:60px;height:20px;line-height:20px;font-size:5.55px;color:#fff;font-weight:bold;text-align:center;-webkit-text-stroke:0.22px #fff">lần bị trả về</div>
<div class="t" style="left:58.80px;top:151.40px;width:90px;height:20px;line-height:20px;font-size:5.55px;color:#fff;font-weight:bold;text-align:center;-webkit-text-stroke:0.22px #fff">Loại công việc</div>
<div class="t" style="left:123.10px;top:151.40px;width:90px;height:20px;line-height:20px;font-size:5.55px;color:#fff;font-weight:bold;text-align:center;-webkit-text-stroke:0.22px #fff">Mức độ hoàn chỉnh</div>
<div class="t" style="left:187.50px;top:151.40px;width:90px;height:20px;line-height:20px;font-size:5.55px;color:#fff;font-weight:bold;text-align:center;-webkit-text-stroke:0.22px #fff">Số ngày còn lại</div>
<div class="t" style="left:248.70px;top:151.40px;width:90px;height:20px;line-height:20px;font-size:5.55px;color:#fff;font-weight:bold;text-align:center;-webkit-text-stroke:0.22px #fff">Cảnh báo hạn</div>
<div class="t" style="left:316.50px;top:151.40px;width:90px;height:20px;line-height:20px;font-size:5.55px;color:#fff;font-weight:bold;text-align:center;-webkit-text-stroke:0.22px #fff">Đã gửi nhắc 3 ngày</div>
<div class="t" style="left:385.50px;top:151.40px;width:90px;height:20px;line-height:20px;font-size:5.55px;color:#fff;font-weight:bold;text-align:center;-webkit-text-stroke:0.22px #fff">Đã gửi nhắc 1 ngày</div>
<div class="t" style="left:457.30px;top:151.40px;width:90px;height:20px;line-height:20px;font-size:5.55px;color:#fff;font-weight:bold;text-align:center;-webkit-text-stroke:0.22px #fff">Đã gửi nhắc hôm nay</div>
<div class="t" style="left:523.60px;top:151.40px;width:90px;height:20px;line-height:20px;font-size:5.55px;color:#fff;font-weight:bold;text-align:center;-webkit-text-stroke:0.22px #fff">Lần gửi gần nhất</div>
<div class="t" style="left:612.40px;top:151.40px;width:90px;height:20px;line-height:20px;font-size:5.55px;color:#fff;font-weight:bold;text-align:center;-webkit-text-stroke:0.22px #fff">Ghi chú</div>
<svg class="a" style="left:72.50px;top:159.75px;overflow:visible" width="5.80" height="2.90" viewBox="0 0 2 1" preserveAspectRatio="none"><path d="M0 0H2L1 1z" fill="#5e2f9c"/></svg>
<svg class="a" style="left:128.40px;top:159.75px;overflow:visible" width="5.80" height="2.90" viewBox="0 0 2 1" preserveAspectRatio="none"><path d="M0 0H2L1 1z" fill="#5e2f9c"/></svg>
<svg class="a" style="left:200.90px;top:159.75px;overflow:visible" width="5.80" height="2.90" viewBox="0 0 2 1" preserveAspectRatio="none"><path d="M0 0H2L1 1z" fill="#5e2f9c"/></svg>
<svg class="a" style="left:257.20px;top:159.75px;overflow:visible" width="5.80" height="2.90" viewBox="0 0 2 1" preserveAspectRatio="none"><path d="M0 0H2L1 1z" fill="#5e2f9c"/></svg>
<svg class="a" style="left:323.10px;top:159.75px;overflow:visible" width="5.80" height="2.90" viewBox="0 0 2 1" preserveAspectRatio="none"><path d="M0 0H2L1 1z" fill="#5e2f9c"/></svg>
<svg class="a" style="left:392.70px;top:159.75px;overflow:visible" width="5.80" height="2.90" viewBox="0 0 2 1" preserveAspectRatio="none"><path d="M0 0H2L1 1z" fill="#5e2f9c"/></svg>
<svg class="a" style="left:461.80px;top:159.75px;overflow:visible" width="5.80" height="2.90" viewBox="0 0 2 1" preserveAspectRatio="none"><path d="M0 0H2L1 1z" fill="#5e2f9c"/></svg>
<svg class="a" style="left:535.20px;top:159.75px;overflow:visible" width="5.80" height="2.90" viewBox="0 0 2 1" preserveAspectRatio="none"><path d="M0 0H2L1 1z" fill="#5e2f9c"/></svg>
<svg class="a" style="left:599.40px;top:159.75px;overflow:visible" width="5.80" height="2.90" viewBox="0 0 2 1" preserveAspectRatio="none"><path d="M0 0H2L1 1z" fill="#5e2f9c"/></svg>
<div class="t" style="left:32.50px;top:162.80px;width:40px;height:20px;line-height:20px;font-size:4.1px;color:#fff;font-weight:bold;text-align:center;font-style:italic">Điểm</div>
<div class="t" style="left:88.20px;top:162.80px;width:40px;height:20px;line-height:20px;font-size:4.1px;color:#fff;font-weight:bold;text-align:center;font-style:italic">Chọn</div>
<div class="t" style="left:152.50px;top:162.80px;width:40px;height:20px;line-height:20px;font-size:4.1px;color:#fff;font-weight:bold;text-align:center;font-style:italic">Điểm</div>
<svg class="a" style="left:225.20px;top:169.40px" width="5.2" height="5.2" viewBox="0 0 10 10"><path d="M2 5a3 3 0 0 1 6 0v4.5H2z" fill="#e8812a"/><circle cx="5" cy="6" r="3.6" fill="#f2a33a"/><path d="M3 7.5c1 1 3 1 4 0" stroke="#c9671c" stroke-width=".8" fill="none"/></svg>
<div class="t" style="left:232.40px;top:162.80px;width:40px;height:20px;line-height:20px;font-size:3.95px;color:#fff;font-weight:bold;text-align:left;font-style:italic">Tự động</div>
<svg class="a" style="left:286.80px;top:169.40px" width="5.2" height="5.2" viewBox="0 0 10 10"><path d="M2 5a3 3 0 0 1 6 0v4.5H2z" fill="#e8812a"/><circle cx="5" cy="6" r="3.6" fill="#f2a33a"/><path d="M3 7.5c1 1 3 1 4 0" stroke="#c9671c" stroke-width=".8" fill="none"/></svg>
<div class="t" style="left:294.00px;top:162.80px;width:40px;height:20px;line-height:20px;font-size:3.95px;color:#fff;font-weight:bold;text-align:left;font-style:italic">Tự động</div>
<svg class="a" style="left:354.50px;top:169.40px" width="5.2" height="5.2" viewBox="0 0 10 10"><path d="M2 5a3 3 0 0 1 6 0v4.5H2z" fill="#e8812a"/><circle cx="5" cy="6" r="3.6" fill="#f2a33a"/><path d="M3 7.5c1 1 3 1 4 0" stroke="#c9671c" stroke-width=".8" fill="none"/></svg>
<div class="t" style="left:361.70px;top:162.80px;width:40px;height:20px;line-height:20px;font-size:3.95px;color:#fff;font-weight:bold;text-align:left;font-style:italic">Tự động</div>
<svg class="a" style="left:423.80px;top:169.40px" width="5.2" height="5.2" viewBox="0 0 10 10"><path d="M2 5a3 3 0 0 1 6 0v4.5H2z" fill="#e8812a"/><circle cx="5" cy="6" r="3.6" fill="#f2a33a"/><path d="M3 7.5c1 1 3 1 4 0" stroke="#c9671c" stroke-width=".8" fill="none"/></svg>
<div class="t" style="left:431.00px;top:162.80px;width:40px;height:20px;line-height:20px;font-size:3.95px;color:#fff;font-weight:bold;text-align:left;font-style:italic">Tự động</div>
<svg class="a" style="left:494.60px;top:169.40px" width="5.2" height="5.2" viewBox="0 0 10 10"><path d="M2 5a3 3 0 0 1 6 0v4.5H2z" fill="#e8812a"/><circle cx="5" cy="6" r="3.6" fill="#f2a33a"/><path d="M3 7.5c1 1 3 1 4 0" stroke="#c9671c" stroke-width=".8" fill="none"/></svg>
<div class="t" style="left:501.80px;top:162.80px;width:40px;height:20px;line-height:20px;font-size:3.95px;color:#fff;font-weight:bold;text-align:left;font-style:italic">Tự động</div>
<svg class="a" style="left:563.60px;top:169.40px" width="5.2" height="5.2" viewBox="0 0 10 10"><path d="M2 5a3 3 0 0 1 6 0v4.5H2z" fill="#e8812a"/><circle cx="5" cy="6" r="3.6" fill="#f2a33a"/><path d="M3 7.5c1 1 3 1 4 0" stroke="#c9671c" stroke-width=".8" fill="none"/></svg>
<div class="t" style="left:570.80px;top:162.80px;width:40px;height:20px;line-height:20px;font-size:3.95px;color:#fff;font-weight:bold;text-align:left;font-style:italic">Tự động</div>
<div class="t" style="left:641.80px;top:162.80px;width:40px;height:20px;line-height:20px;font-size:4.1px;color:#fff;font-weight:bold;text-align:center;font-style:italic">Điểm</div>
<div class="a" style="left:205.5px;top:153px;width:0;height:0;border-left:3px solid transparent;border-top:3px solid #111"></div>
<div class="a" style="left:20.00px;top:377.60px;width:691.00px;height:5.60px;background:#fff"></div>
<div class="a" style="left:20.00px;top:377.40px;width:686.00px;height:0.40px;background:#f0f0f0"></div>
<div class="a" style="left:435.10px;top:378.30px;width:219.90px;height:4.10px;background:#d2d2d2;border-radius:2.1px"></div>
<div class="a" style="left:691.50px;top:377.80px;width:7.20px;height:5.40px;background:#f7f7f7"></div>
<div class="a" style="left:698.70px;top:377.80px;width:7.10px;height:5.40px;background:#f7f7f7"></div>
<svg class="a" style="left:694.20px;top:379.20px;overflow:visible" width="1.80" height="2.40" viewBox="0 0 10 10" preserveAspectRatio="none"><path d="M10 0V10L0 5z" fill="#9aa0a6"/></svg>
<svg class="a" style="left:701.40px;top:379.20px;overflow:visible" width="1.80" height="2.40" viewBox="0 0 10 10" preserveAspectRatio="none"><path d="M0 0V10L10 5z" fill="#9aa0a6"/></svg>
<div class="a" style="left:705.80px;top:62.50px;width:5.20px;height:320.70px;background:#fff"></div>
<div class="a" style="left:705.80px;top:363.40px;width:5.20px;height:19.80px;background:#f8f8f8"></div>
<div class="a" style="left:706.70px;top:73.80px;width:3.80px;height:11.20px;background:#d0d0d0;border-radius:1.9px"></div>
<svg class="a" style="left:707.60px;top:366.00px;overflow:visible" width="2.20" height="1.80" viewBox="0 0 10 10" preserveAspectRatio="none"><path d="M0 10H10L5 0z" fill="#9aa0a6"/></svg>
<svg class="a" style="left:707.60px;top:373.40px;overflow:visible" width="2.20" height="1.80" viewBox="0 0 10 10" preserveAspectRatio="none"><path d="M0 0H10L5 10z" fill="#9aa0a6"/></svg>
<div class="a" style="left:19.80px;top:377.60px;width:0.70px;height:5.60px;background:#e6e6e6"></div>
<div class="a" style="left:0.00px;top:383.20px;width:711.00px;height:16.80px;background:#f9fbfd"></div>
<div class="a" style="left:25.00px;top:391.00px;width:5.00px;height:1.00px;background:#444746"></div>
<div class="a" style="left:27.00px;top:389.00px;width:1.00px;height:5.00px;background:#444746"></div>
<div class="a" style="left:42.00px;top:390.00px;width:6.00px;height:1.00px;background:#6f7378"></div>
<div class="a" style="left:42.00px;top:392.00px;width:6.00px;height:1.00px;background:#6f7378"></div>
<div class="a" style="left:42.00px;top:394.00px;width:6.00px;height:1.00px;background:#6f7378"></div>
<div class="a" style="left:191.10px;top:383.20px;width:49.90px;height:16.80px;background:#e1e9f7"></div>
<div class="t" style="left:64.60px;top:382.00px;width:80px;height:20px;line-height:20px;font-size:6.7px;color:#3c4043;font-weight:normal;text-align:left;">Danh mục</div>
<svg class="a" style="left:100.90px;top:391.40px;overflow:visible" width="3.20" height="1.60" viewBox="0 0 2 1" preserveAspectRatio="none"><path d="M0 0H2L1 1z" fill="#444746"/></svg>
<div class="t" style="left:114.70px;top:382.00px;width:80px;height:20px;line-height:20px;font-size:6.7px;color:#3c4043;font-weight:normal;text-align:left;">Nhân sự</div>
<svg class="a" style="left:144.70px;top:391.40px;overflow:visible" width="3.20" height="1.60" viewBox="0 0 2 1" preserveAspectRatio="none"><path d="M0 0H2L1 1z" fill="#444746"/></svg>
<div class="t" style="left:159.50px;top:382.00px;width:80px;height:20px;line-height:20px;font-size:6.7px;color:#3c4043;font-weight:normal;text-align:left;">Dự án</div>
<svg class="a" style="left:182.40px;top:391.40px;overflow:visible" width="3.20" height="1.60" viewBox="0 0 2 1" preserveAspectRatio="none"><path d="M0 0H2L1 1z" fill="#444746"/></svg>
<div class="t" style="left:196.20px;top:382.00px;width:80px;height:20px;line-height:20px;font-size:6.7px;color:#0b57d0;font-weight:bold;text-align:left;">Công việc</div>
<svg class="a" style="left:233.10px;top:391.40px;overflow:visible" width="3.20" height="1.60" viewBox="0 0 2 1" preserveAspectRatio="none"><path d="M0 0H2L1 1z" fill="#0b57d0"/></svg>
<div class="t" style="left:246.80px;top:382.00px;width:80px;height:20px;line-height:20px;font-size:6.7px;color:#3c4043;font-weight:normal;text-align:left;">Cấu hình email</div>
<svg class="a" style="left:297.60px;top:391.40px;overflow:visible" width="3.20" height="1.60" viewBox="0 0 2 1" preserveAspectRatio="none"><path d="M0 0H2L1 1z" fill="#444746"/></svg>
<svg class="a" style="left:695.80px;top:390.80px;overflow:visible" width="4.80" height="4.20" viewBox="0 0 10 14" preserveAspectRatio="none"><path d="M8.5 1.5L3 7l5.5 5.5" fill="none" stroke="#5f6368" stroke-width="3"/></svg>
</body></html>
